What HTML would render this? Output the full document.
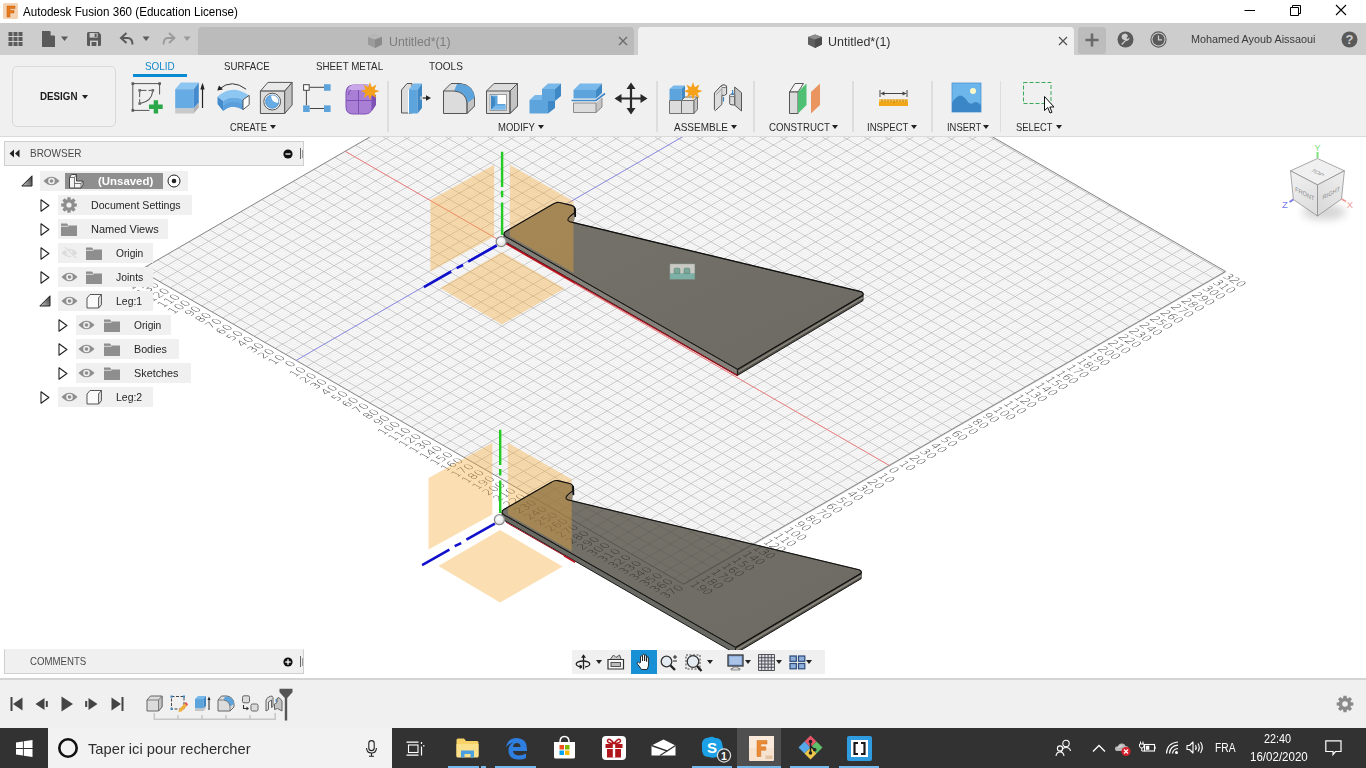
<!DOCTYPE html>
<html><head><meta charset="utf-8"><title>Autodesk Fusion 360</title>
<style>
*{box-sizing:border-box;margin:0;padding:0}
html,body{width:1366px;height:768px;overflow:hidden;background:#fff;font-family:"Liberation Sans",sans-serif;font-size:12px;color:#333}
.a{position:absolute}
svg{display:block;overflow:visible}
#title{position:absolute;left:0;top:0;width:1366px;height:23px;background:#fff}
#title .t{position:absolute;left:23px;top:3px;font-size:12.4px;color:#000;white-space:nowrap;letter-spacing:0.05px}
#tabbar{position:absolute;left:0;top:23px;width:1366px;height:32px;background:#cdcdcd}
#toolbar{position:absolute;left:0;top:55px;width:1366px;height:82px;background:#f0f0f0;border-bottom:1px solid #dadada}
#cv{position:absolute;left:0;top:137px;width:1366px;height:541px;background:#fff;overflow:hidden}
.tabname{position:absolute;font-size:12px;white-space:nowrap}
.tl{position:absolute;top:60px;font-size:11.5px;color:#333;white-space:nowrap;letter-spacing:0.1px}
.gl{position:absolute;top:120px;font-size:11px;color:#333;white-space:nowrap;letter-spacing:0.1px}
.gl i{display:inline-block;width:0;height:0;border-left:3px solid transparent;border-right:3px solid transparent;border-top:4px solid #222;margin-left:4px;vertical-align:2px}
.sep{position:absolute;top:82px;width:1px;height:50px;background:#dcdcdc}
.row{position:absolute;height:20px;background:rgba(238,238,238,0.93);white-space:nowrap}
.row span{position:absolute;top:3px;font-size:12px;color:#222}
#timeline{position:absolute;left:0;top:678px;width:1366px;height:50px;background:#f0f0f0;border-top:2px solid #d4d4d4}
#taskbar{position:absolute;left:0;top:728px;width:1366px;height:40px;background:#323232}
</style></head><body>
<div id="title">
<svg class="a" style="left:3px;top:3px" width="15" height="16" viewBox="0 0 15 16"><rect width="15" height="16" rx="1.5" fill="#f3d3b3"/><path d="M4,3 H12 V5.6 H7 V7.4 H11 V10 H7 V14 H4 Z" fill="#e87a1c"/><path d="M4,3 H12 V5.6 H7 V7.4 H11 V10 H7 V14 H4 Z" fill="none" stroke="#c25e10" stroke-width="0.5"/></svg>
<div class="a" style="white-space:nowrap;left:23.0px;top:5.0px;font-size:12.4px;line-height:14.9px;color:#000;transform:scaleX(0.937);transform-origin:0 50%;">Autodesk Fusion 360 (Education License)</div>
<svg class="a" style="left:1244px;top:4px" width="104" height="14" viewBox="0 0 104 14"><path d="M0.5,6.5 H11" stroke="#000" stroke-width="1" fill="none"/><path d="M46.5,3.5 H54.5 V11.5 H46.5 Z M48.5,3.5 V1.5 H56.5 V9.5 H54.5" stroke="#000" stroke-width="1" fill="none"/><path d="M92,1 L102,11 M102,1 L92,11" stroke="#000" stroke-width="1.1" fill="none"/></svg>
</div>
<div id="tabbar">
<!-- app grid -->
<svg class="a" style="left:8px;top:8px" width="16" height="16" viewBox="0 0 16 16" fill="#5a5a5a"><rect x="0.5" y="1" width="4" height="4"/><rect x="5.5" y="1" width="4" height="4"/><rect x="10.5" y="1" width="4" height="4"/><rect x="0.5" y="6" width="4" height="4"/><rect x="5.5" y="6" width="4" height="4"/><rect x="10.5" y="6" width="4" height="4"/><rect x="0.5" y="11" width="4" height="4"/><rect x="5.5" y="11" width="4" height="4"/><rect x="10.5" y="11" width="4" height="4"/></svg>
<svg class="a" style="left:42px;top:7px" width="28" height="18" viewBox="0 0 28 18"><path d="M0,1 H8 L13,6 V17 H0 Z" fill="#5a5a5a"/><path d="M8.6,0.6 V5.4 H13.4 Z" fill="#cdcdcd"/><path d="M19,6.5 H26 L22.5,11 Z" fill="#5a5a5a"/></svg>
<svg class="a" style="left:86px;top:8px" width="16" height="16" viewBox="0 0 16 16"><path d="M1,2.5 Q1,1 2.5,1 H12.5 L15,3.5 V13.5 Q15,15 13.5,15 H2.5 Q1,15 1,13.500 Z" fill="#5a5a5a"/><rect x="3.6" y="2" width="8" height="4.6" fill="#cdcdcd"/><rect x="8.6" y="2.6" width="2" height="3.4" fill="#5a5a5a"/><rect x="4" y="9.6" width="8" height="5.4" fill="#cdcdcd"/><rect x="5.6" y="11" width="4.8" height="4" fill="#5a5a5a"/></svg>
<svg class="a" style="left:119px;top:8px" width="34" height="16" viewBox="0 0 34 16"><path d="M7.5,2 L2,7 L7.5,12 M2.6,7 H8.5 Q13.5,7 13.5,13.5" stroke="#5a5a5a" stroke-width="2" fill="none"/><path d="M23.6,5.5 H30.600 L27.1,10 Z" fill="#5a5a5a"/></svg>
<svg class="a" style="left:161px;top:8px" width="34" height="16" viewBox="0 0 34 16"><path d="M8,2 L13.500,7 L8,12 M13,7 H7 Q2.500,7 2.500,13.500" stroke="#9a9a9a" stroke-width="1.8" fill="none"/><path d="M22.6,5.5 H29.600 L26.100,10 Z" fill="#9a9a9a"/></svg>
<!-- inactive tab -->
<div class="a" style="left:198px;top:4px;width:436px;height:28px;background:#bbbbbb;border-radius:4px 4px 0 0"></div>
<svg class="a" style="left:367px;top:9.500px" width="16" height="16" viewBox="0 0 16 16"><path d="M1,4 L8,1.500 L15,4 V11.500 L8,15 L1,11.500 Z" fill="#9b9b9b"/><path d="M1,4 L8,6.500 L15,4 L8,1.500 Z" fill="#b8b8b8"/><path d="M8,6.500 V15 L15,11.500 V4 Z" fill="#8a8a8a"/></svg>
<div class="a" style="white-space:nowrap;left:388.5px;top:12.0px;font-size:12px;line-height:14.4px;color:#7c7c7c;transform:scaleX(1.025);transform-origin:0 50%;">Untitled*(1)</div>
<svg class="a" style="left:618px;top:13px" width="10" height="10" viewBox="0 0 10 10"><path d="M1,1 L9,9 M9,1 L1,9" stroke="#6a6a6a" stroke-width="1.3"/></svg>
<!-- active tab -->
<div class="a" style="left:637.500px;top:4px;width:436.500px;height:28px;background:#f0f0f0;border-radius:4px 4px 0 0"></div>
<svg class="a" style="left:807px;top:9.500px" width="16" height="16" viewBox="0 0 16 16"><path d="M1,4 L8,1.500 L15,4 V11.500 L8,15 L1,11.500 Z" fill="#5f5f5f"/><path d="M1,4 L8,6.500 L15,4 L8,1.500 Z" fill="#8d8d8d"/><path d="M8,6.500 V15 L15,11.500 V4 Z" fill="#4c4c4c"/></svg>
<div class="a" style="white-space:nowrap;left:828.0px;top:12.0px;font-size:12px;line-height:14.4px;color:#333;transform:scaleX(1.041);transform-origin:0 50%;">Untitled*(1)</div>
<svg class="a" style="left:1058px;top:13px" width="10" height="10" viewBox="0 0 10 10"><path d="M1,1 L9,9 M9,1 L1,9" stroke="#555" stroke-width="1.3"/></svg>
<!-- plus -->
<div class="a" style="left:1078px;top:4px;width:28px;height:27px;background:#bcbcbc;border-radius:3px"></div>
<svg class="a" style="left:1085px;top:10px" width="14" height="14" viewBox="0 0 14 14"><path d="M7,0.500 V13.500 M0.500,7 H13.500" stroke="#6a6a6a" stroke-width="2.6"/></svg>
<!-- wrench -->
<svg class="a" style="left:1117px;top:8px" width="17" height="17" viewBox="0 0 17 17"><circle cx="8.500" cy="8.500" r="8" fill="#5a5a5a"/><path d="M4.200,13 L8.200,9 A3.200,3.200 0 1 1 11,5.200 L9.400,6.900 L10.600,8.100 L12.500,6.500 A3.300,3.300 0 0 1 8.900,10 L5.200,13.900 Z" fill="#cdcdcd"/></svg>
<!-- clock -->
<svg class="a" style="left:1150px;top:8px" width="17" height="17" viewBox="0 0 17 17"><circle cx="8.500" cy="8.500" r="7.600" fill="none" stroke="#5a5a5a" stroke-width="1.100"/><circle cx="8.500" cy="8.500" r="6" fill="#5a5a5a"/><path d="M8.500,4.500 V8.800 H12" stroke="#cdcdcd" stroke-width="1.200" fill="none"/></svg>
<div class="a" style="white-space:nowrap;left:1191.0px;top:9.2px;font-size:11.6px;line-height:13.9px;color:#3a3a3a;transform:scaleX(0.934);transform-origin:0 50%;">Mohamed Ayoub Aissaoui</div>
<svg class="a" style="left:1341px;top:8px" width="17" height="17" viewBox="0 0 17 17"><circle cx="8.500" cy="8.500" r="8" fill="#5a5a5a"/><text x="8.500" y="13" text-anchor="middle" font-family="Liberation Sans,sans-serif" font-weight="bold" font-size="13" fill="#cdcdcd">?</text></svg>
</div>
<div id="toolbar">
<div class="a" style="left:12px;top:11px;width:104px;height:61px;border:1px solid #d9d9d9;border-radius:5px;background:#f1f1f1"></div>
<div class="a" style="white-space:nowrap;left:39.5px;top:34.6px;font-size:11.5px;line-height:13.8px;color:#1a1a1a;font-weight:bold;transform:scaleX(0.851);transform-origin:0 50%;">DESIGN</div>
<div class="a" style="left:81.5px;top:39.5px;width:0;height:0;border-left:3.5px solid transparent;border-right:3.5px solid transparent;border-top:4.5px solid #222"></div>
<div class="a" style="white-space:nowrap;left:144.6px;top:4.6px;font-size:11.5px;line-height:13.8px;color:#1689cb;transform:scaleX(0.861);transform-origin:0 50%;">SOLID</div>
<div class="a" style="left:132.600px;top:18.800px;width:54px;height:2.800px;background:#0a8ad2"></div>
<div class="a" style="white-space:nowrap;left:223.5px;top:4.6px;font-size:11.5px;line-height:13.8px;color:#2b2b2b;transform:scaleX(0.841);transform-origin:0 50%;">SURFACE</div>
<div class="a" style="white-space:nowrap;left:316.3px;top:4.6px;font-size:11.5px;line-height:13.8px;color:#2b2b2b;transform:scaleX(0.851);transform-origin:0 50%;">SHEET METAL</div>
<div class="a" style="white-space:nowrap;left:428.9px;top:4.6px;font-size:11.5px;line-height:13.8px;color:#2b2b2b;transform:scaleX(0.874);transform-origin:0 50%;">TOOLS</div>
<div class="a" style="white-space:nowrap;left:229.7px;top:66.1px;font-size:10.8px;line-height:13.0px;color:#2b2b2b;transform:scaleX(0.856);transform-origin:0 50%;">CREATE</div>
<div class="a" style="left:270.2px;top:70.2px;width:0;height:0;border-left:3.5px solid transparent;border-right:3.5px solid transparent;border-top:4.5px solid #222"></div>
<div class="a" style="white-space:nowrap;left:497.6px;top:66.1px;font-size:10.8px;line-height:13.0px;color:#2b2b2b;transform:scaleX(0.879);transform-origin:0 50%;">MODIFY</div>
<div class="a" style="left:538.2px;top:70.2px;width:0;height:0;border-left:3.5px solid transparent;border-right:3.5px solid transparent;border-top:4.5px solid #222"></div>
<div class="a" style="white-space:nowrap;left:673.6px;top:66.1px;font-size:10.8px;line-height:13.0px;color:#2b2b2b;transform:scaleX(0.926);transform-origin:0 50%;">ASSEMBLE</div>
<div class="a" style="left:730.5px;top:70.2px;width:0;height:0;border-left:3.5px solid transparent;border-right:3.5px solid transparent;border-top:4.5px solid #222"></div>
<div class="a" style="white-space:nowrap;left:768.5px;top:66.1px;font-size:10.8px;line-height:13.0px;color:#2b2b2b;transform:scaleX(0.897);transform-origin:0 50%;">CONSTRUCT</div>
<div class="a" style="left:832.0px;top:70.2px;width:0;height:0;border-left:3.5px solid transparent;border-right:3.5px solid transparent;border-top:4.5px solid #222"></div>
<div class="a" style="white-space:nowrap;left:867.3px;top:66.1px;font-size:10.8px;line-height:13.0px;color:#2b2b2b;transform:scaleX(0.884);transform-origin:0 50%;">INSPECT</div>
<div class="a" style="left:910.5px;top:70.2px;width:0;height:0;border-left:3.5px solid transparent;border-right:3.5px solid transparent;border-top:4.5px solid #222"></div>
<div class="a" style="white-space:nowrap;left:946.6px;top:66.1px;font-size:10.8px;line-height:13.0px;color:#2b2b2b;transform:scaleX(0.870);transform-origin:0 50%;">INSERT</div>
<div class="a" style="left:983.1px;top:70.2px;width:0;height:0;border-left:3.5px solid transparent;border-right:3.5px solid transparent;border-top:4.5px solid #222"></div>
<div class="a" style="white-space:nowrap;left:1015.7px;top:66.1px;font-size:10.8px;line-height:13.0px;color:#2b2b2b;transform:scaleX(0.869);transform-origin:0 50%;">SELECT</div>
<div class="a" style="left:1055.5px;top:70.2px;width:0;height:0;border-left:3.5px solid transparent;border-right:3.5px solid transparent;border-top:4.5px solid #222"></div>
<div class="a" style="left:387.0px;top:26px;width:1.800px;height:51px;background:#dddddd"></div>
<div class="a" style="left:656.3px;top:26px;width:1.800px;height:51px;background:#dddddd"></div>
<div class="a" style="left:753.1px;top:26px;width:1.800px;height:51px;background:#dddddd"></div>
<div class="a" style="left:852.4px;top:26px;width:1.800px;height:51px;background:#dddddd"></div>
<div class="a" style="left:930.8px;top:26px;width:1.800px;height:51px;background:#dddddd"></div>
<div class="a" style="left:999.6px;top:26px;width:1.800px;height:51px;background:#dddddd"></div>
<svg class="a" style="left:130px;top:25px" width="36" height="35" viewBox="0 0 36 35"><path d="M2.800,3.600 H29.600 V14.500 M2.800,3.600 V30.400 H19.500" stroke="#555" stroke-width="1" fill="none"/><rect x="1.500" y="2.300" width="2.600" height="2.600" fill="#555"/><rect x="28.300" y="2.300" width="2.600" height="2.600" fill="#555"/><rect x="1.500" y="29.100" width="2.600" height="2.600" fill="#555"/><path d="M11,10.400 H21.500 M9.700,11.700 V22" stroke="#555" stroke-width="1" stroke-dasharray="5.500 2" fill="none"/><path d="M11,23.300 Q21.500,21 22.600,11.800" stroke="#555" stroke-width="1.100" fill="none"/><rect x="8.400" y="9.100" width="2.600" height="2.600" fill="#666"/><rect x="21.500" y="9.100" width="2.600" height="2.600" fill="#666"/><rect x="8.400" y="22.200" width="2.600" height="2.600" fill="#666"/><path d="M23.700,20.200 H28.100 V24.600 H32.700 V29 H28.100 V33.500 H23.700 V29 H19 V24.600 H23.700 Z" fill="#2ba84a"/></svg>
<svg class="a" style="left:174px;top:26px" width="33" height="34" viewBox="0 0 33 34"><path d="M1.200,8.200 L6.800,1.400 H24.800 L19.800,8.200 Z" fill="#8ec6f2"/><path d="M1.200,8.200 H19.800 V27.500 H1.200 Z" fill="#67abe4"/><path d="M19.800,8.200 L24.800,1.400 V21.500 L19.800,27.500 Z" fill="#448bcd"/><path d="M1.200,27.500 H19.800 V32.500 H1.200 Z" fill="#c9c9c9"/><path d="M19.800,27.500 L24.800,21.500 V26.500 L19.800,32.500 Z" fill="#b4b4b4"/><path d="M28.500,27 V4.500" stroke="#222" stroke-width="1.200"/><path d="M26.300,8.500 L28.500,1.800 L30.700,8.500 Z" fill="#222"/></svg>
<svg class="a" style="left:215px;top:27px" width="36" height="32" viewBox="0 0 36 32"><path d="M31.100,7.200 Q17,-3.500 4.500,6.800" stroke="#333" stroke-width="1" fill="none"/><path d="M2.300,8.600 L4,3.400 L8,7.600 Z" fill="#222"/><path d="M2.500,14.700 Q16.800,1.500 34.200,13.400 L28,17.800 Q16.800,12.800 8.100,19 Z" fill="#8ec6f2"/><path d="M2.500,14.700 L8.100,19 V29 L2.500,22.100 Z" fill="#448bcd"/><path d="M8.100,19 Q16.800,12.800 28,17.800 V27.700 Q16.800,21 8.100,29 Z" fill="#67abe4"/><path d="M8.100,24 Q16.800,17 28,22.500 V27.700 Q16.800,21 8.100,29 Z" fill="#5a9fdb"/><path d="M28,17.800 L34.200,13.400 V22.700 L28,27.700 Z" fill="#fff" stroke="#444" stroke-width="0.900" stroke-linejoin="round"/></svg>
<svg class="a" style="left:259px;top:26px" width="34" height="34" viewBox="0 0 34 34"><path d="M1.400,10.100 L8.900,1.400 H33.100 L25.700,10.100 Z" fill="#e9e9e9" stroke="#555" stroke-width="1" stroke-linejoin="round"/><path d="M1.400,10.100 H25.700 V32.500 H1.400 Z" fill="#dcdcdc" stroke="#555" stroke-width="1" stroke-linejoin="round"/><path d="M25.700,10.100 L33.100,1.400 V24 L25.700,32.500 Z" fill="#c2c2c2" stroke="#555" stroke-width="1" stroke-linejoin="round"/><circle cx="13.200" cy="20.600" r="8.400" fill="#fff" stroke="#555" stroke-width="1"/><circle cx="13.200" cy="20.600" r="6.700" fill="#67abe4"/><clipPath id="hc"><circle cx="13.200" cy="20.600" r="6.700"/></clipPath><circle cx="18.400" cy="15.600" r="6.200" fill="#fff" clip-path="url(#hc)"/><circle cx="13.200" cy="20.600" r="6.700" fill="none" stroke="#3f7fc0" stroke-width="0.700"/></svg>
<svg class="a" style="left:302px;top:27px" width="31" height="32" viewBox="0 0 31 32"><path d="M4.400,8.400 V23.400 M7.700,5.300 H22 M7.700,26.500 H22" stroke="#444" stroke-width="1" fill="none"/><rect x="1.600" y="2.700" width="5.600" height="5.600" fill="#fff" stroke="#444" stroke-width="1"/><rect x="22" y="2.200" width="6.600" height="6.600" fill="#5ea4dc"/><rect x="1.100" y="23.400" width="6.600" height="6.600" fill="#5ea4dc"/><rect x="22" y="23.400" width="6.600" height="6.600" fill="#5ea4dc"/></svg>
<svg class="a" style="left:344px;top:26px" width="36" height="35" viewBox="0 0 36 35"><path d="M2,12 Q2,4 10,4 H22 Q28,4 28,10 V26 Q28,33 21,33 H9 Q2,33 2,26 Z" fill="#a97fd6" stroke="#7d50b4" stroke-width="1"/><path d="M4,8 Q6,3.500 11,3.500 H22 Q26,3.500 27.500,7 L25,9 H7 Z" fill="#c9a8ea"/><path d="M28,12 L32,14 V24 L28,30 Z" fill="#7d50b4"/><path d="M2.500,19.500 H27.500 M14.500,9 V32.500 M7,9 Q4.500,10 4.500,14" stroke="#7d50b4" stroke-width="1" fill="none"/><path d="M26,1 L27.800,6.200 L32.500,3.500 L30.500,8.500 L35.500,10 L30.500,12 L32.500,17 L27.800,14 L26,19 L24.200,14 L19.500,17 L21.500,12 L16.800,10 L21.500,8.500 L19.500,3.500 L24.200,6.200 Z" fill="#f5a11c"/></svg>
<svg class="a" style="left:400px;top:26px" width="32" height="34" viewBox="0 0 32 34"><path d="M1.500,9 L7,2.500 H12 V32 H1.500 Z" fill="#dcdcdc" stroke="#555" stroke-width="1"/><path d="M8.500,9 L13.500,2.500 H22 L17.500,9 Z" fill="#79b8ea"/><path d="M8.500,9 H17.500 V32.500 H8.500 Z" fill="#5ea4dc"/><path d="M17.500,9 L22,2.500 V27 L17.500,32.500 Z" fill="#3f88c6"/><path d="M8.500,9 V32.500" stroke="#fff" stroke-width="1"/><path d="M20,17 H27" stroke="#222" stroke-width="1.200"/><path d="M26,14.200 L31,17 L26,19.800 Z" fill="#222"/><rect x="20" y="15.500" width="3" height="3" fill="#fff" opacity="0.6"/></svg>
<svg class="a" style="left:442px;top:26px" width="35" height="34" viewBox="0 0 35 34"><path d="M1.500,10 L9,2.500 H18 Q32,4 32.500,18 V25 L25,32.500 H1.500 Z" fill="#dcdcdc" stroke="#555" stroke-width="1"/><path d="M25,32.500 V21 L32.500,16 V25 Z" fill="#c4c4c4" stroke="#555" stroke-width="0.800"/><path d="M15,3 H18 Q32,4 32.500,17 L25,22 Q24,11 12,10 Z" fill="#5ea4dc"/><path d="M1.500,10 H12 Q24,11 25,22 V32.500" stroke="#555" stroke-width="1" fill="none"/></svg>
<svg class="a" style="left:485px;top:26px" width="35" height="34" viewBox="0 0 35 34"><path d="M1.500,10 L9,2.500 H32.500 V25 L25,32.500 H1.500 Z" fill="#dcdcdc" stroke="#555" stroke-width="1"/><path d="M25,10 L32.500,2.500 V25 L25,32.500 Z" fill="#c4c4c4" stroke="#555" stroke-width="1"/><path d="M1.500,10 H25 V32.500" stroke="#555" stroke-width="1" fill="none"/><rect x="5" y="13.500" width="16.500" height="16" fill="#fff" stroke="#888" stroke-width="0.800"/><path d="M6,14.500 H12.500 V23 H20.500 V28.500 H6 Z" fill="#5ea4dc"/><path d="M6,14.500 H12.500 V23 H20.500 L17,26 H9 V17 Z" fill="#3f88c6" opacity="0.0"/><path d="M6,28.500 L10,24.500 H20.500 V28.500 Z" fill="#79b8ea"/><path d="M6,14.500 L10,17 V24.500 L6,28.500 Z" fill="#3f88c6"/></svg>
<svg class="a" style="left:528px;top:26px" width="35" height="34" viewBox="0 0 35 34"><path d="M14,8 L20,2.500 H33 L27,8 Z" fill="#79b8ea"/><path d="M14,8 H27 V20 H14 Z" fill="#5ea4dc"/><path d="M27,8 L33,2.500 V15 L27,20 Z" fill="#3f88c6"/><path d="M1.500,19 L7,14 H20 L20,14 L14.500,19 Z" fill="#79b8ea"/><path d="M1.500,19 H20 V32.500 H1.500 Z" fill="#5ea4dc"/><path d="M20,20 L27,20 L27,20 V27 L20,32.500 Z" fill="#3f88c6"/><path d="M14,14 H20 V20 H14 Z" fill="#5ea4dc"/></svg>
<svg class="a" style="left:571px;top:26px" width="35" height="34" viewBox="0 0 35 34"><path d="M2.500,9 L9,2.500 H31 L25,9 Z" fill="#79b8ea"/><path d="M2.500,9 H25 V17.500 H2.500 Z" fill="#5ea4dc"/><path d="M25,9 L31,2.500 V12 L25,17.500 Z" fill="#3f88c6"/><path d="M0.500,19.500 H25 L34,12.500" stroke="#3f88c6" stroke-width="1.600" fill="none"/><path d="M2.500,22 H25 V31.500 H2.500 Z" fill="#dcdcdc"/><path d="M25,22 L31,16.500 V26 L25,31.500 Z" fill="#c4c4c4"/><path d="M2.500,22 H25 V31.500 H2.500 Z M25,31.500 L31,26 V17" stroke="#777" stroke-width="0.800" fill="none"/></svg>
<svg class="a" style="left:614px;top:27px" width="34" height="33" viewBox="0 0 34 33"><path d="M17,4 V29 M4,16.500 H30" stroke="#2a2a2a" stroke-width="2.200"/><path d="M17,0.500 L21.500,7 H12.500 Z M17,32.500 L21.500,26 H12.500 Z M0.500,16.500 L7.500,12 V21 Z M33.500,16.500 L26.500,12 V21 Z" fill="#2a2a2a"/></svg>
<svg class="a" style="left:668px;top:26px" width="36" height="35" viewBox="0 0 36 35"><path d="M1.500,8 L5.500,4.500 H17 L13.500,8 Z" fill="#79b8ea"/><path d="M1.500,8 H13.500 V19.500 H1.500 Z" fill="#5ea4dc"/><path d="M13.500,8 L17,4.500 V16 L13.500,19.500 Z" fill="#3f88c6"/><path d="M1.500,19.500 H13.500 V32.500 H1.500 Z" fill="#dcdcdc" stroke="#666" stroke-width="0.900"/><path d="M13.500,19.500 H26 V32.500 H13.500 Z" fill="#dcdcdc" stroke="#666" stroke-width="0.900"/><path d="M13.500,19.500 L17,16 H29.500 L26,19.500 Z" fill="#ececec" stroke="#666" stroke-width="0.900"/><path d="M26,19.500 L29.500,16 V28.500 L26,32.500 Z" fill="#c4c4c4" stroke="#666" stroke-width="0.900"/><path d="M25,1 L26.800,6.200 L31.500,3.500 L29.500,8.500 L34.500,10 L29.500,12 L31.500,17 L26.800,14 L25,19 L23.200,14 L18.500,17 L20.500,12 L15.800,10 L20.500,8.500 L18.500,3.500 L23.200,6.200 Z" fill="#f5a11c"/></svg>
<svg class="a" style="left:713px;top:28px" width="31" height="30" viewBox="0 0 31 30"><path d="M1.400,10 L8.200,2.600 Q10.600,0.800 13.600,3 V11 Q11.500,13 8.900,12.400 V21.400 L2.400,27.600 L1.400,26.700 Z" fill="#dcdcdc" stroke="#555" stroke-width="1" stroke-linejoin="round"/><path d="M3.300,11.600 L8.900,5.600 V12.400" stroke="#8a8a8a" stroke-width="0.800" fill="none"/><ellipse cx="10.900" cy="3.300" rx="2.500" ry="1.300" fill="#f4f4f4" stroke="#555" stroke-width="0.800"/><path d="M21.700,4 L28.500,9.700 V28 L21.700,22.100 Z" fill="#c4c4c4" stroke="#555" stroke-width="1" stroke-linejoin="round"/><path d="M16.700,12.400 V20.500 Q16.700,21.500 18,21.700 L21.700,22.100 V12.400 Z" fill="#dcdcdc" stroke="#555" stroke-width="1" stroke-linejoin="round"/><ellipse cx="19.200" cy="12.400" rx="2.500" ry="1.300" fill="#f0f0f0" stroke="#555" stroke-width="0.800"/><path d="M10.500,14 V18.600 M19.600,7.100 V12.100" stroke="#3f88c6" stroke-width="1.200"/><path d="M18,10.900 H21.200" stroke="#3f88c6" stroke-width="1"/></svg>
<svg class="a" style="left:788px;top:26px" width="34" height="34" viewBox="0 0 34 34"><path d="M1.500,11 L7,2.500 H15.500 L10,11 Z" fill="#f4f4f4" stroke="#555" stroke-width="1"/><path d="M1.500,11 H10 V32.500 H1.500 Z" fill="#dcdcdc" stroke="#555" stroke-width="1"/><path d="M10,11 L18.500,2.500 V24 L10,32.500 Z" fill="#4fbf74"/><path d="M23,11 L32,2.500 V24 L23,32.500 Z" fill="#ea9560"/></svg>
<svg class="a" style="left:878px;top:34px" width="31" height="19" viewBox="0 0 31 19"><path d="M2,1 V8 M29,1 V8 M3,4.500 H28" stroke="#444" stroke-width="1" fill="none"/><path d="M2.500,4.500 L6.500,2.500 V6.500 Z M28.500,4.500 L24.500,2.500 V6.500 Z" fill="#444"/><rect x="1" y="10.500" width="29" height="6.500" fill="#f0a818"/><rect x="1" y="10.500" width="29" height="2.200" fill="#f7c452"/><path d="M4,10.500 V13 M7,10.500 V13 M10,10.500 V13 M13,10.500 V13 M16,10.500 V14 M19,10.500 V13 M22,10.500 V13 M25,10.500 V13 M28,10.500 V13" stroke="#a86a00" stroke-width="0.700"/></svg>
<svg class="a" style="left:952px;top:28px" width="29" height="29" viewBox="0 0 29 29"><rect width="29" height="29" fill="#6db6ec"/><rect width="29" height="29" fill="none" stroke="#4a96d4" stroke-width="0.800"/><path d="M0,20 Q3,14 8,12.500 Q12,12.500 16,19 Q19,22 22,19.500 Q25,18 29,22 V29 H0 Z" fill="#3a86c6"/><circle cx="21" cy="8" r="3" fill="#fdf8c8"/></svg>
<svg class="a" style="left:1022px;top:26px" width="34" height="34" viewBox="0 0 34 34"><rect x="1.500" y="1.500" width="27.500" height="21" fill="none" stroke="#3aa85a" stroke-width="1" stroke-dasharray="4 2"/><path d="M22.500,15.500 V29.500 L25.800,26.500 L28,32 L30,31.200 L27.800,26 H32 Z" fill="#fff" stroke="#111" stroke-width="1"/></svg>
</div>
<div id="cv"><svg class="cv" width="1366" height="541" viewBox="0 0 1366 541">
<defs><linearGradient id="pg" x1="0" y1="0" x2="1" y2="1"><stop offset="0" stop-color="#75726a"/><stop offset="1" stop-color="#6c6a62"/></linearGradient><radialGradient id="sph" cx="0.4" cy="0.35" r="0.7"><stop offset="0" stop-color="#fff"/><stop offset="1" stop-color="#ddd"/></radialGradient>
<clipPath id="c2"><path d="M502.1,375.3 Q501.8,373.7 503.8,372.6 L551.8,344.9 Q554.8,343 557.8,343.6 L569.8,346.5 Q573.1,347.5 573.1,350.7 L573.1,353.6 Q564.6,359.6 566.1,361.6 Q567.6,363.3 571.6,363.7 L858.9,432.7 Q861.4,433.3 861.4,435.7 L861.1,436.3 L735.5,510.5 L503.1,377.5 Z"/><path d="M502.1,375.3 L503.1,377.5 L735.5,510.5 L735.5,516.5 L503.5,382.9 L502.1,379.7 Z"/><path d="M735.5,510.5 L861.1,436.3 L861.1,441.7 L735.5,516.5 Z"/></clipPath>
<linearGradient id="vc1" x1="0" y1="0" x2="0.6" y2="1"><stop offset="0" stop-color="#f2f2f2"/><stop offset="1" stop-color="#dedede"/></linearGradient><linearGradient id="vc2" x1="1" y1="0" x2="0.4" y2="1"><stop offset="0" stop-color="#efefef"/><stop offset="1" stop-color="#dadada"/></linearGradient><filter id="bl" x="-50%" y="-100%" width="200%" height="300%"><feGaussianBlur stdDeviation="4"/></filter></defs>
<polygon points="139.9,133.2 683.5,447.1 1225.5,134.4 680.8,-180.2" fill="#fdfdfd"/>
<path d="M140.9,133.8 L681.9,-179.6M143,135 L684,-178.4M145.1,136.2 L686.1,-177.2M147.2,137.4 L688.2,-176M151.4,139.9 L692.4,-173.5M153.5,141.1 L694.5,-172.3M155.6,142.3 L696.6,-171.1M157.7,143.5 L698.7,-169.9M161.9,145.9 L702.9,-167.5M164,147.1 L705,-166.2M166.1,148.3 L707.1,-165M168.2,149.6 L709.2,-163.8M172.4,152 L713.4,-161.4M174.5,153.2 L715.5,-160.2M176.6,154.4 L717.6,-159M178.7,155.6 L719.7,-157.7M182.9,158 L723.9,-155.3M185,159.2 L726,-154.1M187.1,160.5 L728.1,-152.9M189.2,161.7 L730.2,-151.7M193.4,164.1 L734.4,-149.2M195.5,165.3 L736.5,-148M197.6,166.5 L738.6,-146.8M199.7,167.7 L740.7,-145.6M203.9,170.1 L744.9,-143.2M206,171.4 L747,-142M208.1,172.6 L749.1,-140.8M210.2,173.8 L751.2,-139.5M214.4,176.2 L755.4,-137.1M216.5,177.4 L757.5,-135.9M218.6,178.6 L759.6,-134.7M220.7,179.8 L761.7,-133.5M224.8,182.3 L765.9,-131M226.9,183.5 L768,-129.8M229,184.7 L770.1,-128.6M231.1,185.9 L772.2,-127.4M235.3,188.3 L776.4,-125M237.4,189.5 L778.5,-123.8M239.5,190.7 L780.6,-122.5M241.6,191.9 L782.7,-121.3M245.8,194.4 L786.9,-118.9M247.9,195.6 L789,-117.7M250,196.8 L791.1,-116.5M252.1,198 L793.2,-115.3M256.3,200.4 L797.4,-112.8M258.4,201.6 L799.5,-111.6M260.5,202.8 L801.6,-110.4M262.6,204.1 L803.7,-109.2M266.8,206.5 L807.9,-106.8M268.9,207.7 L810.1,-105.5M271,208.9 L812.2,-104.3M273.1,210.1 L814.3,-103.1M277.3,212.5 L818.5,-100.7M279.4,213.7 L820.6,-99.5M281.5,215 L822.7,-98.3M283.6,216.2 L824.8,-97.1M287.8,218.6 L829,-94.6M289.9,219.8 L831.1,-93.4M292,221 L833.2,-92.2M294.1,222.2 L835.3,-91M298.3,224.6 L839.5,-88.6M300.3,225.9 L841.6,-87.3M302.4,227.1 L843.7,-86.1M304.5,228.3 L845.8,-84.9M308.7,230.7 L850,-82.5M310.8,231.9 L852.1,-81.3M312.9,233.1 L854.2,-80.1M315,234.3 L856.3,-78.8M319.2,236.8 L860.5,-76.4M321.3,238 L862.6,-75.2M323.4,239.2 L864.7,-74M325.5,240.4 L866.8,-72.8M329.7,242.8 L871,-70.3M331.8,244 L873.1,-69.1M333.9,245.2 L875.2,-67.9M336,246.4 L877.3,-66.7M340.2,248.9 L881.5,-64.3M342.3,250.1 L883.6,-63.1M344.4,251.3 L885.7,-61.9M346.5,252.5 L887.8,-60.6M350.7,254.9 L892,-58.2M352.8,256.1 L894.1,-57M354.9,257.3 L896.2,-55.8M357,258.5 L898.3,-54.6M361.2,261 L902.5,-52.1M363.3,262.2 L904.6,-50.9M365.4,263.4 L906.7,-49.7M367.5,264.6 L908.8,-48.5M371.7,267 L913,-46.1M373.8,268.2 L915.1,-44.9M375.9,269.4 L917.2,-43.6M377.9,270.7 L919.3,-42.4M382.1,273.1 L923.5,-40M384.2,274.3 L925.6,-38.8M386.3,275.5 L927.7,-37.6M388.4,276.7 L929.8,-36.4M392.6,279.1 L934,-33.9M394.7,280.3 L936.1,-32.7M396.8,281.6 L938.2,-31.5M398.9,282.8 L940.3,-30.3M403.1,285.2 L944.5,-27.9M405.2,286.4 L946.6,-26.7M407.3,287.6 L948.8,-25.4M409.4,288.8 L950.9,-24.2M413.6,291.2 L955.1,-21.8M415.7,292.5 L957.2,-20.6M417.8,293.7 L959.3,-19.4M419.9,294.9 L961.4,-18.2M424.1,297.3 L965.6,-15.7M426.2,298.5 L967.7,-14.5M428.3,299.7 L969.8,-13.3M430.4,300.9 L971.9,-12.1M434.6,303.4 L976.1,-9.7M436.7,304.6 L978.2,-8.4M438.8,305.8 L980.3,-7.2M440.9,307 L982.4,-6M445.1,309.4 L986.6,-3.6M447.2,310.6 L988.7,-2.4M449.3,311.8 L990.8,-1.2M451.4,313 L992.9,0M455.5,315.5 L997.1,2.5M457.6,316.7 L999.2,3.7M459.7,317.9 L1001.3,4.9M461.8,319.1 L1003.4,6.1M466,321.5 L1007.6,8.5M468.1,322.7 L1009.7,9.8M470.2,323.9 L1011.8,11M472.3,325.2 L1013.9,12.2M476.5,327.6 L1018.1,14.6M478.6,328.8 L1020.2,15.8M480.7,330 L1022.3,17M482.8,331.2 L1024.4,18.3M487,333.6 L1028.6,20.7M489.1,334.8 L1030.7,21.9M491.2,336.1 L1032.8,23.1M493.3,337.3 L1034.9,24.3M497.5,339.7 L1039.1,26.7M499.6,340.9 L1041.2,28M501.7,342.1 L1043.3,29.2M503.8,343.3 L1045.4,30.4M508,345.7 L1049.6,32.8M510.1,347 L1051.7,34M512.2,348.2 L1053.8,35.2M514.3,349.4 L1055.9,36.5M518.5,351.8 L1060.1,38.9M520.6,353 L1062.2,40.1M522.7,354.2 L1064.3,41.3M524.8,355.4 L1066.4,42.5M528.9,357.9 L1070.6,45M531,359.1 L1072.7,46.2M533.1,360.3 L1074.8,47.4M535.2,361.5 L1076.9,48.6M539.4,363.9 L1081.1,51M541.5,365.1 L1083.2,52.2M543.6,366.3 L1085.3,53.5M545.7,367.5 L1087.4,54.7M549.9,370 L1091.6,57.1M552,371.2 L1093.7,58.3M554.1,372.4 L1095.8,59.5M556.2,373.6 L1098,60.7M560.4,376 L1102.2,63.2M562.5,377.2 L1104.3,64.4M564.6,378.4 L1106.4,65.6M566.7,379.7 L1108.5,66.8M570.9,382.1 L1112.7,69.2M573,383.3 L1114.8,70.4M575.1,384.5 L1116.9,71.7M577.2,385.7 L1119,72.9M581.4,388.1 L1123.2,75.3M583.5,389.3 L1125.3,76.5M585.6,390.5 L1127.4,77.7M587.7,391.8 L1129.5,78.9M591.9,394.2 L1133.7,81.4M594,395.4 L1135.8,82.6M596.1,396.6 L1137.9,83.8M598.2,397.8 L1140,85M602.3,400.2 L1144.2,87.4M604.4,401.4 L1146.3,88.6M606.5,402.7 L1148.4,89.9M608.6,403.9 L1150.5,91.1M612.8,406.3 L1154.7,93.5M614.9,407.5 L1156.8,94.7M617,408.7 L1158.9,95.9M619.1,409.9 L1161,97.1M623.3,412.3 L1165.2,99.6M625.4,413.6 L1167.3,100.8M627.5,414.8 L1169.4,102M629.6,416 L1171.5,103.2M633.8,418.4 L1175.7,105.6M635.9,419.6 L1177.8,106.9M638,420.8 L1179.9,108.1M640.1,422 L1182,109.3M644.3,424.5 L1186.2,111.7M646.4,425.7 L1188.3,112.9M648.5,426.9 L1190.4,114.1M650.6,428.1 L1192.5,115.3M654.8,430.5 L1196.7,117.8M656.9,431.7 L1198.8,119M659,432.9 L1200.9,120.2M661.1,434.1 L1203,121.4M665.3,436.6 L1207.2,123.8M667.4,437.8 L1209.3,125.1M669.5,439 L1211.4,126.3M671.5,440.2 L1213.5,127.5M675.7,442.6 L1217.7,129.9M677.8,443.8 L1219.8,131.1M679.9,445 L1221.9,132.3M682,446.3 L1224,133.6M677.2,-178.1 L1221.9,136.5M675.2,-176.9 L1219.8,137.7M673.1,-175.7 L1217.7,138.9M671,-174.5 L1215.7,140.1M666.8,-172.1 L1211.5,142.5M664.7,-170.9 L1209.4,143.7M662.6,-169.7 L1207.3,144.9M660.5,-168.4 L1205.2,146.1M656.3,-166 L1201,148.5M654.2,-164.8 L1198.9,149.8M652.2,-163.6 L1196.8,151M650.1,-162.4 L1194.7,152.2M645.9,-160 L1190.5,154.6M643.8,-158.8 L1188.4,155.8M641.7,-157.5 L1186.3,157M639.6,-156.3 L1184.2,158.2M635.4,-153.9 L1180,160.6M633.3,-152.7 L1177.9,161.8M631.2,-151.5 L1175.8,163M629.2,-150.3 L1173.8,164.3M625,-147.9 L1169.6,166.7M622.9,-146.6 L1167.5,167.9M620.8,-145.4 L1165.4,169.1M618.7,-144.2 L1163.3,170.3M614.5,-141.8 L1159.1,172.7M612.4,-140.6 L1157,173.9M610.3,-139.4 L1154.9,175.1M608.3,-138.2 L1152.8,176.3M604.1,-135.7 L1148.6,178.8M602,-134.5 L1146.5,180M599.9,-133.3 L1144.4,181.2M597.8,-132.1 L1142.3,182.4M593.6,-129.7 L1138.1,184.8M591.5,-128.5 L1136.1,186M589.4,-127.3 L1134,187.2M587.4,-126.1 L1131.9,188.4M583.2,-123.6 L1127.7,190.8M581.1,-122.4 L1125.6,192M579,-121.2 L1123.5,193.3M576.9,-120 L1121.4,194.5M572.7,-117.6 L1117.2,196.9M570.6,-116.4 L1115.1,198.1M568.5,-115.2 L1113,199.3M566.5,-114 L1110.9,200.5M562.3,-111.5 L1106.7,202.9M560.2,-110.3 L1104.6,204.1M558.1,-109.1 L1102.6,205.3M556,-107.9 L1100.5,206.5M551.8,-105.5 L1096.3,209M549.7,-104.3 L1094.2,210.2M547.7,-103.1 L1092.1,211.4M545.6,-101.8 L1090,212.6M541.4,-99.4 L1085.8,215M539.3,-98.2 L1083.7,216.2M537.2,-97 L1081.6,217.4M535.1,-95.8 L1079.5,218.6M530.9,-93.4 L1075.3,221M528.9,-92.2 L1073.2,222.2M526.8,-91 L1071.2,223.4M524.7,-89.7 L1069.1,224.7M520.5,-87.3 L1064.9,227.1M518.4,-86.1 L1062.8,228.3M516.3,-84.9 L1060.7,229.5M514.2,-83.7 L1058.6,230.7M510.1,-81.3 L1054.4,233.1M508,-80.1 L1052.3,234.3M505.9,-78.9 L1050.2,235.5M503.8,-77.6 L1048.1,236.7M499.6,-75.2 L1043.9,239.1M497.5,-74 L1041.9,240.4M495.4,-72.8 L1039.8,241.6M493.4,-71.6 L1037.7,242.8M489.2,-69.2 L1033.5,245.2M487.1,-68 L1031.4,246.4M485,-66.8 L1029.3,247.6M482.9,-65.5 L1027.2,248.8M478.7,-63.1 L1023,251.2M476.6,-61.9 L1020.9,252.4M474.6,-60.7 L1018.8,253.6M472.5,-59.5 L1016.7,254.8M468.3,-57.1 L1012.6,257.2M466.2,-55.9 L1010.5,258.5M464.1,-54.7 L1008.4,259.7M462,-53.4 L1006.3,260.9M457.9,-51 L1002.1,263.3M455.8,-49.8 L1000,264.5M453.7,-48.6 L997.9,265.7M451.6,-47.4 L995.8,266.9M447.4,-45 L991.6,269.3M445.3,-43.8 L989.6,270.5M443.2,-42.6 L987.5,271.7M441.2,-41.4 L985.4,272.9M437,-38.9 L981.2,275.4M434.9,-37.7 L979.1,276.6M432.8,-36.5 L977,277.8M430.7,-35.3 L974.9,279M426.5,-32.9 L970.7,281.4M424.5,-31.7 L968.6,282.6M422.4,-30.5 L966.5,283.8M420.3,-29.3 L964.5,285M416.1,-26.8 L960.3,287.4M414,-25.6 L958.2,288.6M411.9,-24.4 L956.1,289.8M409.9,-23.2 L954,291M405.7,-20.8 L949.8,293.4M403.6,-19.6 L947.7,294.7M401.5,-18.4 L945.6,295.9M399.4,-17.2 L943.5,297.1M395.2,-14.7 L939.4,299.5M393.2,-13.5 L937.3,300.7M391.1,-12.3 L935.2,301.9M389,-11.1 L933.1,303.1M384.8,-8.7 L928.9,305.5M382.7,-7.5 L926.8,306.7M380.6,-6.3 L924.7,307.9M378.6,-5.1 L922.6,309.1M374.4,-2.7 L918.5,311.5M372.3,-1.5 L916.4,312.7M370.2,-0.2 L914.3,314M368.1,1 L912.2,315.2M364,3.4 L908,317.6M361.9,4.6 L905.9,318.8M359.8,5.8 L903.8,320M357.7,7 L901.7,321.2M353.5,9.4 L897.6,323.6M351.4,10.6 L895.5,324.8M349.4,11.8 L893.4,326M347.3,13.1 L891.3,327.2M343.1,15.5 L887.1,329.6M341,16.7 L885,330.8M338.9,17.9 L882.9,332M336.8,19.1 L880.8,333.2M332.7,21.5 L876.7,335.7M330.6,22.7 L874.6,336.9M328.5,23.9 L872.5,338.1M326.4,25.1 L870.4,339.3M322.2,27.6 L866.2,341.7M320.2,28.8 L864.1,342.9M318.1,30 L862,344.1M316,31.2 L859.9,345.3M311.8,33.6 L855.8,347.7M309.7,34.8 L853.7,348.9M307.6,36 L851.6,350.1M305.6,37.2 L849.5,351.3M301.4,39.6 L845.3,353.7M299.3,40.8 L843.2,354.9M297.2,42 L841.1,356.2M295.1,43.3 L839,357.4M291,45.7 L834.9,359.8M288.9,46.9 L832.8,361M286.8,48.1 L830.7,362.2M284.7,49.3 L828.6,363.4M280.5,51.7 L824.4,365.8M278.5,52.9 L822.3,367M276.4,54.1 L820.2,368.2M274.3,55.3 L818.2,369.4M270.1,57.8 L814,371.8M268,59 L811.9,373M265.9,60.2 L809.8,374.2M263.9,61.4 L807.7,375.4M259.7,63.8 L803.5,377.8M257.6,65 L801.4,379.1M255.5,66.2 L799.4,380.3M253.4,67.4 L797.3,381.5M249.3,69.8 L793.1,383.9M247.2,71 L791,385.1M245.1,72.2 L788.9,386.3M243,73.5 L786.8,387.5M238.9,75.9 L782.7,389.9M236.8,77.1 L780.6,391.1M234.7,78.3 L778.5,392.3M232.6,79.5 L776.4,393.5M228.4,81.9 L772.2,395.9M226.3,83.1 L770.1,397.1M224.3,84.3 L768,398.3M222.2,85.5 L765.9,399.5M218,87.9 L761.8,401.9M215.9,89.1 L759.7,403.1M213.8,90.4 L757.6,404.4M211.8,91.6 L755.5,405.6M207.6,94 L751.3,408M205.5,95.2 L749.2,409.2M203.4,96.4 L747.2,410.4M201.3,97.6 L745.1,411.6M197.2,100 L740.9,414M195.1,101.2 L738.8,415.2M193,102.4 L736.7,416.4M190.9,103.6 L734.6,417.6M186.8,106 L730.5,420M184.7,107.3 L728.4,421.2M182.6,108.5 L726.3,422.4M180.5,109.7 L724.2,423.6M176.3,112.1 L720,426M174.3,113.3 L717.9,427.2M172.2,114.5 L715.8,428.4M170.1,115.7 L713.8,429.6M165.9,118.1 L709.6,432.1M163.8,119.3 L707.5,433.3M161.8,120.5 L705.4,434.5M159.7,121.7 L703.3,435.7M155.5,124.2 L699.2,438.1M153.4,125.4 L697.1,439.3M151.4,126.6 L695,440.5M149.3,127.8 L692.9,441.7M145.1,130.2 L688.7,444.1M143,131.4 L686.6,445.3M140.9,132.6 L684.5,446.5" stroke="#e3e3e3" stroke-width="0.46" fill="none"/>
<path d="M149.3,138.7 L690.3,-174.7M159.8,144.7 L700.8,-168.7M170.3,150.8 L711.3,-162.6M180.8,156.8 L721.8,-156.5M191.3,162.9 L732.3,-150.5M201.8,168.9 L742.8,-144.4M212.3,175 L753.3,-138.3M222.7,181 L763.8,-132.3M233.2,187.1 L774.3,-126.2M243.7,193.2 L784.8,-120.1M254.2,199.2 L795.3,-114M264.7,205.3 L805.8,-108M275.2,211.3 L816.4,-101.9M285.7,217.4 L826.9,-95.8M296.2,223.4 L837.4,-89.8M306.6,229.5 L847.9,-83.7M317.1,235.5 L858.4,-77.6M327.6,241.6 L868.9,-71.6M338.1,247.7 L879.4,-65.5M348.6,253.7 L889.9,-59.4M359.1,259.8 L900.4,-53.4M369.6,265.8 L910.9,-47.3M380,271.9 L921.4,-41.2M390.5,277.9 L931.9,-35.2M401,284 L942.4,-29.1M411.5,290 L953,-23M422,296.1 L963.5,-16.9M432.5,302.1 L974,-10.9M443,308.2 L984.5,-4.8M453.4,314.3 L995,1.3M463.9,320.3 L1005.5,7.3M474.4,326.4 L1016,13.4M484.9,332.4 L1026.5,19.5M495.4,338.5 L1037,25.5M505.9,344.5 L1047.5,31.6M516.4,350.6 L1058,37.7M526.8,356.6 L1068.5,43.7M537.3,362.7 L1079,49.8M547.8,368.8 L1089.5,55.9M558.3,374.8 L1100.1,61.9M568.8,380.9 L1110.6,68M579.3,386.9 L1121.1,74.1M589.8,393 L1131.6,80.2M600.2,399 L1142.1,86.2M610.7,405.1 L1152.6,92.3M621.2,411.1 L1163.1,98.4M631.7,417.2 L1173.6,104.4M642.2,423.2 L1184.1,110.5M652.7,429.3 L1194.6,116.6M663.2,435.4 L1205.1,122.6M673.6,441.4 L1215.6,128.7M684.1,447.5 L1226.1,134.8M679.3,-179.4 L1224,135.2M668.9,-173.3 L1213.6,141.3M658.4,-167.2 L1203.1,147.3M648,-161.2 L1192.6,153.4M637.5,-155.1 L1182.1,159.4M627.1,-149.1 L1171.7,165.5M616.6,-143 L1161.2,171.5M606.2,-137 L1150.7,177.5M595.7,-130.9 L1140.2,183.6M585.3,-124.8 L1129.8,189.6M574.8,-118.8 L1119.3,195.7M564.4,-112.7 L1108.8,201.7M553.9,-106.7 L1098.4,207.7M543.5,-100.6 L1087.9,213.8M533,-94.6 L1077.4,219.8M522.6,-88.5 L1067,225.9M512.1,-82.5 L1056.5,231.9M501.7,-76.4 L1046,237.9M491.3,-70.4 L1035.6,244M480.8,-64.3 L1025.1,250M470.4,-58.3 L1014.7,256M459.9,-52.2 L1004.2,262.1M449.5,-46.2 L993.7,268.1M439.1,-40.1 L983.3,274.1M428.6,-34.1 L972.8,280.2M418.2,-28 L962.4,286.2M407.8,-22 L951.9,292.2M397.3,-16 L941.5,298.3M386.9,-9.9 L931,304.3M376.5,-3.9 L920.6,310.3M366,2.2 L910.1,316.4M355.6,8.2 L899.6,322.4M345.2,14.3 L889.2,328.4M334.8,20.3 L878.7,334.5M324.3,26.3 L868.3,340.5M313.9,32.4 L857.9,346.5M303.5,38.4 L847.4,352.5M293,44.5 L837,358.6M282.6,50.5 L826.5,364.6M272.2,56.5 L816.1,370.6M261.8,62.6 L805.6,376.6M251.4,68.6 L795.2,382.7M240.9,74.7 L784.7,388.7M230.5,80.7 L774.3,394.7M220.1,86.7 L763.9,400.7M209.7,92.8 L753.4,406.8M199.3,98.8 L743,412.8M188.8,104.8 L732.5,418.8M178.4,110.9 L722.1,424.8M168,116.9 L711.7,430.8M157.6,122.9 L701.2,436.9M147.2,129 L690.8,442.9" stroke="#b4b4b4" stroke-width="0.72" fill="none"/>
<polygon points="139.9,133.2 683.5,447.1 1225.5,134.4 680.8,-180.2" fill="none" stroke="#767676" stroke-width="0.9"/>
<line x1="345.2" y1="14.3" x2="889.2" y2="328.4" stroke="#f08080" stroke-width="1"/><line x1="837.4" y1="-89.8" x2="296.2" y2="223.4" stroke="#8f8fe8" stroke-width="1"/>
<g font-family="DejaVu Sans Light, DejaVu Sans, Liberation Sans, sans-serif" font-weight="200" font-size="11.6" fill="#3c3c3c" opacity="0.98"><text transform="matrix(0.831 -0.481 0.831 0.480 149.3 138.7)" x="-3.5" y="4" text-anchor="end">140</text>
<text transform="matrix(0.831 -0.481 0.831 0.480 159.8 144.7)" x="-3.5" y="4" text-anchor="end">130</text>
<text transform="matrix(0.831 -0.481 0.831 0.480 170.3 150.8)" x="-3.5" y="4" text-anchor="end">120</text>
<text transform="matrix(0.831 -0.481 0.831 0.480 180.8 156.8)" x="-3.5" y="4" text-anchor="end">110</text>
<text transform="matrix(0.831 -0.481 0.831 0.480 191.3 162.9)" x="-3.5" y="4" text-anchor="end">100</text>
<text transform="matrix(0.831 -0.481 0.831 0.480 201.8 168.9)" x="-3.5" y="4" text-anchor="end">90</text>
<text transform="matrix(0.831 -0.481 0.831 0.480 212.3 175)" x="-3.5" y="4" text-anchor="end">80</text>
<text transform="matrix(0.831 -0.481 0.831 0.480 222.7 181)" x="-3.5" y="4" text-anchor="end">70</text>
<text transform="matrix(0.831 -0.481 0.831 0.480 233.2 187.1)" x="-3.5" y="4" text-anchor="end">60</text>
<text transform="matrix(0.831 -0.481 0.831 0.480 243.7 193.2)" x="-3.5" y="4" text-anchor="end">50</text>
<text transform="matrix(0.831 -0.481 0.831 0.480 254.2 199.2)" x="-3.5" y="4" text-anchor="end">40</text>
<text transform="matrix(0.831 -0.481 0.831 0.480 264.7 205.3)" x="-3.5" y="4" text-anchor="end">30</text>
<text transform="matrix(0.831 -0.481 0.831 0.480 275.2 211.3)" x="-3.5" y="4" text-anchor="end">20</text>
<text transform="matrix(0.831 -0.481 0.831 0.480 285.7 217.4)" x="-3.5" y="4" text-anchor="end">10</text>
<text transform="matrix(0.831 -0.481 0.831 0.480 296.2 223.4)" x="-3.5" y="4" text-anchor="end">0</text>
<text transform="matrix(0.831 -0.481 0.831 0.480 306.6 229.5)" x="-3.5" y="4" text-anchor="end">10</text>
<text transform="matrix(0.831 -0.481 0.831 0.480 317.1 235.5)" x="-3.5" y="4" text-anchor="end">20</text>
<text transform="matrix(0.831 -0.481 0.831 0.480 327.6 241.6)" x="-3.5" y="4" text-anchor="end">30</text>
<text transform="matrix(0.831 -0.481 0.831 0.480 338.1 247.7)" x="-3.5" y="4" text-anchor="end">40</text>
<text transform="matrix(0.831 -0.481 0.831 0.480 348.6 253.7)" x="-3.5" y="4" text-anchor="end">50</text>
<text transform="matrix(0.831 -0.481 0.831 0.480 359.1 259.8)" x="-3.5" y="4" text-anchor="end">60</text>
<text transform="matrix(0.831 -0.481 0.831 0.480 369.6 265.8)" x="-3.5" y="4" text-anchor="end">70</text>
<text transform="matrix(0.831 -0.481 0.831 0.480 380 271.9)" x="-3.5" y="4" text-anchor="end">80</text>
<text transform="matrix(0.831 -0.481 0.831 0.480 390.5 277.9)" x="-3.5" y="4" text-anchor="end">90</text>
<text transform="matrix(0.831 -0.481 0.831 0.480 401 284)" x="-3.5" y="4" text-anchor="end">100</text>
<text transform="matrix(0.831 -0.481 0.831 0.480 411.5 290)" x="-3.5" y="4" text-anchor="end">110</text>
<text transform="matrix(0.831 -0.480 0.831 0.480 422 296.1)" x="-3.5" y="4" text-anchor="end">120</text>
<text transform="matrix(0.831 -0.480 0.831 0.480 432.5 302.1)" x="-3.5" y="4" text-anchor="end">130</text>
<text transform="matrix(0.831 -0.480 0.831 0.480 443 308.2)" x="-3.5" y="4" text-anchor="end">140</text>
<text transform="matrix(0.831 -0.480 0.831 0.480 453.4 314.3)" x="-3.5" y="4" text-anchor="end">150</text>
<text transform="matrix(0.831 -0.480 0.831 0.480 463.9 320.3)" x="-3.5" y="4" text-anchor="end">160</text>
<text transform="matrix(0.831 -0.480 0.831 0.480 474.4 326.4)" x="-3.5" y="4" text-anchor="end">170</text>
<text transform="matrix(0.831 -0.480 0.831 0.480 484.9 332.4)" x="-3.5" y="4" text-anchor="end">180</text>
<text transform="matrix(0.831 -0.480 0.831 0.480 495.4 338.5)" x="-3.5" y="4" text-anchor="end">190</text>
<text transform="matrix(0.831 -0.480 0.831 0.480 505.9 344.5)" x="-3.5" y="4" text-anchor="end">200</text>
<text transform="matrix(0.831 -0.480 0.831 0.480 516.4 350.6)" x="-3.5" y="4" text-anchor="end">210</text>
<text transform="matrix(0.831 -0.480 0.831 0.480 526.8 356.6)" x="-3.5" y="4" text-anchor="end">220</text>
<text transform="matrix(0.831 -0.480 0.831 0.480 537.3 362.7)" x="-3.5" y="4" text-anchor="end">230</text>
<text transform="matrix(0.831 -0.480 0.831 0.480 547.8 368.8)" x="-3.5" y="4" text-anchor="end">240</text>
<text transform="matrix(0.831 -0.480 0.831 0.480 558.3 374.8)" x="-3.5" y="4" text-anchor="end">250</text>
<text transform="matrix(0.831 -0.480 0.831 0.480 568.8 380.9)" x="-3.5" y="4" text-anchor="end">260</text>
<text transform="matrix(0.831 -0.480 0.831 0.480 579.3 386.9)" x="-3.5" y="4" text-anchor="end">270</text>
<text transform="matrix(0.831 -0.480 0.831 0.480 589.8 393)" x="-3.5" y="4" text-anchor="end">280</text>
<text transform="matrix(0.831 -0.480 0.831 0.480 600.2 399)" x="-3.5" y="4" text-anchor="end">290</text>
<text transform="matrix(0.831 -0.480 0.831 0.480 610.7 405.1)" x="-3.5" y="4" text-anchor="end">300</text>
<text transform="matrix(0.831 -0.480 0.831 0.480 621.2 411.1)" x="-3.5" y="4" text-anchor="end">310</text>
<text transform="matrix(0.831 -0.480 0.831 0.480 631.7 417.2)" x="-3.5" y="4" text-anchor="end">320</text>
<text transform="matrix(0.831 -0.480 0.831 0.480 642.2 423.2)" x="-3.5" y="4" text-anchor="end">330</text>
<text transform="matrix(0.831 -0.480 0.831 0.480 652.7 429.3)" x="-3.5" y="4" text-anchor="end">340</text>
<text transform="matrix(0.831 -0.480 0.831 0.480 663.2 435.4)" x="-3.5" y="4" text-anchor="end">350</text>
<text transform="matrix(0.832 -0.480 0.831 0.480 673.6 441.4)" x="-3.5" y="4" text-anchor="end">360</text>
<text transform="matrix(0.832 -0.480 0.831 0.480 684.1 447.5)" x="-3.5" y="4" text-anchor="end">370</text>
<text transform="matrix(0.831 0.480 -0.832 0.480 1224 135.2)" x="4" y="6">320</text>
<text transform="matrix(0.831 0.480 -0.832 0.480 1213.6 141.3)" x="4" y="6">310</text>
<text transform="matrix(0.831 0.480 -0.832 0.480 1203.1 147.3)" x="4" y="6">300</text>
<text transform="matrix(0.831 0.480 -0.832 0.480 1192.6 153.4)" x="4" y="6">290</text>
<text transform="matrix(0.831 0.480 -0.832 0.480 1182.1 159.4)" x="4" y="6">280</text>
<text transform="matrix(0.831 0.480 -0.832 0.480 1171.7 165.5)" x="4" y="6">270</text>
<text transform="matrix(0.831 0.480 -0.832 0.480 1161.2 171.5)" x="4" y="6">260</text>
<text transform="matrix(0.831 0.480 -0.832 0.480 1150.7 177.5)" x="4" y="6">250</text>
<text transform="matrix(0.831 0.480 -0.832 0.480 1140.2 183.6)" x="4" y="6">240</text>
<text transform="matrix(0.831 0.480 -0.832 0.480 1129.8 189.6)" x="4" y="6">230</text>
<text transform="matrix(0.831 0.480 -0.832 0.480 1119.3 195.7)" x="4" y="6">220</text>
<text transform="matrix(0.831 0.480 -0.832 0.480 1108.8 201.7)" x="4" y="6">210</text>
<text transform="matrix(0.831 0.480 -0.832 0.480 1098.4 207.7)" x="4" y="6">200</text>
<text transform="matrix(0.831 0.480 -0.832 0.480 1087.9 213.8)" x="4" y="6">190</text>
<text transform="matrix(0.831 0.480 -0.832 0.480 1077.4 219.8)" x="4" y="6">180</text>
<text transform="matrix(0.831 0.480 -0.832 0.480 1067 225.9)" x="4" y="6">170</text>
<text transform="matrix(0.831 0.480 -0.832 0.480 1056.5 231.9)" x="4" y="6">160</text>
<text transform="matrix(0.831 0.480 -0.832 0.480 1046 237.9)" x="4" y="6">150</text>
<text transform="matrix(0.831 0.480 -0.832 0.480 1035.6 244)" x="4" y="6">140</text>
<text transform="matrix(0.831 0.480 -0.832 0.480 1025.1 250)" x="4" y="6">130</text>
<text transform="matrix(0.831 0.480 -0.832 0.480 1014.7 256)" x="4" y="6">120</text>
<text transform="matrix(0.831 0.480 -0.832 0.480 1004.2 262.1)" x="4" y="6">110</text>
<text transform="matrix(0.831 0.480 -0.832 0.480 993.7 268.1)" x="4" y="6">100</text>
<text transform="matrix(0.831 0.480 -0.832 0.480 983.3 274.1)" x="4" y="6">90</text>
<text transform="matrix(0.831 0.480 -0.832 0.480 972.8 280.2)" x="4" y="6">80</text>
<text transform="matrix(0.831 0.480 -0.832 0.480 962.4 286.2)" x="4" y="6">70</text>
<text transform="matrix(0.831 0.480 -0.832 0.480 951.9 292.2)" x="4" y="6">60</text>
<text transform="matrix(0.831 0.480 -0.832 0.480 941.5 298.3)" x="4" y="6">50</text>
<text transform="matrix(0.831 0.480 -0.832 0.480 931 304.3)" x="4" y="6">40</text>
<text transform="matrix(0.831 0.480 -0.832 0.480 920.6 310.3)" x="4" y="6">30</text>
<text transform="matrix(0.831 0.480 -0.832 0.480 910.1 316.4)" x="4" y="6">20</text>
<text transform="matrix(0.831 0.480 -0.832 0.480 899.6 322.4)" x="4" y="6">10</text>
<text transform="matrix(0.831 0.480 -0.832 0.480 889.2 328.4)" x="4" y="6">0</text>
<text transform="matrix(0.831 0.480 -0.832 0.480 878.7 334.5)" x="4" y="6">10</text>
<text transform="matrix(0.831 0.480 -0.832 0.480 868.3 340.5)" x="4" y="6">20</text>
<text transform="matrix(0.831 0.480 -0.832 0.480 857.9 346.5)" x="4" y="6">30</text>
<text transform="matrix(0.831 0.480 -0.832 0.480 847.4 352.5)" x="4" y="6">40</text>
<text transform="matrix(0.831 0.480 -0.832 0.480 837 358.6)" x="4" y="6">50</text>
<text transform="matrix(0.831 0.480 -0.832 0.480 826.5 364.6)" x="4" y="6">60</text>
<text transform="matrix(0.831 0.480 -0.832 0.480 816.1 370.6)" x="4" y="6">70</text>
<text transform="matrix(0.831 0.480 -0.832 0.480 805.6 376.6)" x="4" y="6">80</text>
<text transform="matrix(0.831 0.480 -0.832 0.480 795.2 382.7)" x="4" y="6">90</text>
<text transform="matrix(0.831 0.480 -0.832 0.480 784.7 388.7)" x="4" y="6">100</text>
<text transform="matrix(0.831 0.480 -0.832 0.480 774.3 394.7)" x="4" y="6">110</text>
<text transform="matrix(0.831 0.480 -0.832 0.480 763.9 400.7)" x="4" y="6">120</text>
<text transform="matrix(0.831 0.480 -0.832 0.480 753.4 406.8)" x="4" y="6">130</text>
<text transform="matrix(0.831 0.480 -0.832 0.480 743 412.8)" x="4" y="6">140</text>
<text transform="matrix(0.831 0.480 -0.832 0.480 732.5 418.8)" x="4" y="6">150</text>
<text transform="matrix(0.831 0.480 -0.832 0.480 722.1 424.8)" x="4" y="6">160</text>
<text transform="matrix(0.831 0.480 -0.832 0.480 711.7 430.8)" x="4" y="6">170</text>
<text transform="matrix(0.831 0.480 -0.832 0.480 701.2 436.9)" x="4" y="6">180</text>
<text transform="matrix(0.831 0.480 -0.832 0.480 690.8 442.9)" x="4" y="6">190</text></g>
<path d="M735.5,510.5 L861.1,436.3 L861.1,441.7 L735.5,516.5 Z" fill="#55534c" stroke="#1a1a18" stroke-width="1" stroke-linejoin="round"/>
<path d="M736.5,512.7 L861.1,438.7" stroke="#8a887f" stroke-width="1.6" fill="none"/>
<path id="p2" d="M502.1,375.3 Q501.8,373.7 503.8,372.6 L551.8,344.9 Q554.8,343 557.8,343.6 L569.8,346.5 Q573.1,347.5 573.1,350.7 L573.1,353.6 Q564.6,359.6 566.1,361.6 Q567.6,363.3 571.6,363.7 L858.9,432.7 Q861.4,433.3 861.4,435.7 L861.1,436.3 L735.5,510.5 L503.1,377.5 Z" fill="url(#pg)" stroke="#151513" stroke-width="0.6" stroke-linejoin="round"/>
<path d="M573.1,350.7 L573.1,353.6 Q564.6,359.6 566.1,361.6 Q567.6,363.3 571.6,363.7 Q573.5,360.1 573.1,350.7 Z" fill="#2a2824" opacity="0.3"/>
<g clip-path="url(#c2)">
<polygon points="139.9,133.2 683.5,447.1 1225.5,134.4 680.8,-180.2" fill="#807e76" fill-opacity="0.12" stroke="#3c3b36" stroke-opacity="0.5" stroke-width="1"/>
<path d="M149.3,138.7 L690.3,-174.7M159.8,144.7 L700.8,-168.7M170.3,150.8 L711.3,-162.6M180.8,156.8 L721.8,-156.5M191.3,162.9 L732.3,-150.5M201.8,168.9 L742.8,-144.4M212.3,175 L753.3,-138.3M222.7,181 L763.8,-132.3M233.2,187.1 L774.3,-126.2M243.7,193.2 L784.8,-120.1M254.2,199.2 L795.3,-114M264.7,205.3 L805.8,-108M275.2,211.3 L816.4,-101.9M285.7,217.4 L826.9,-95.8M296.2,223.4 L837.4,-89.8M306.6,229.5 L847.9,-83.7M317.1,235.5 L858.4,-77.6M327.6,241.6 L868.9,-71.6M338.1,247.7 L879.4,-65.5M348.6,253.7 L889.9,-59.4M359.1,259.8 L900.4,-53.4M369.6,265.8 L910.9,-47.3M380,271.9 L921.4,-41.2M390.5,277.9 L931.9,-35.2M401,284 L942.4,-29.1M411.5,290 L953,-23M422,296.1 L963.5,-16.9M432.5,302.1 L974,-10.9M443,308.2 L984.5,-4.8M453.4,314.3 L995,1.3M463.9,320.3 L1005.5,7.3M474.4,326.4 L1016,13.4M484.9,332.4 L1026.5,19.5M495.4,338.5 L1037,25.5M505.9,344.5 L1047.5,31.6M516.4,350.6 L1058,37.7M526.8,356.6 L1068.5,43.7M537.3,362.7 L1079,49.8M547.8,368.8 L1089.5,55.9M558.3,374.8 L1100.1,61.9M568.8,380.9 L1110.6,68M579.3,386.9 L1121.1,74.1M589.8,393 L1131.6,80.2M600.2,399 L1142.1,86.2M610.7,405.1 L1152.6,92.3M621.2,411.1 L1163.1,98.4M631.7,417.2 L1173.6,104.4M642.2,423.2 L1184.1,110.5M652.7,429.3 L1194.6,116.6M663.2,435.4 L1205.1,122.6M673.6,441.4 L1215.6,128.7M684.1,447.5 L1226.1,134.8M679.3,-179.4 L1224,135.2M668.9,-173.3 L1213.6,141.3M658.4,-167.2 L1203.1,147.3M648,-161.2 L1192.6,153.4M637.5,-155.1 L1182.1,159.4M627.1,-149.1 L1171.7,165.5M616.6,-143 L1161.2,171.5M606.2,-137 L1150.7,177.5M595.7,-130.9 L1140.2,183.6M585.3,-124.8 L1129.8,189.6M574.8,-118.8 L1119.3,195.7M564.4,-112.7 L1108.8,201.7M553.9,-106.7 L1098.4,207.7M543.5,-100.6 L1087.9,213.8M533,-94.6 L1077.4,219.8M522.6,-88.5 L1067,225.9M512.1,-82.5 L1056.5,231.9M501.7,-76.4 L1046,237.9M491.3,-70.4 L1035.6,244M480.8,-64.3 L1025.1,250M470.4,-58.3 L1014.7,256M459.9,-52.2 L1004.2,262.1M449.5,-46.2 L993.7,268.1M439.1,-40.1 L983.3,274.1M428.6,-34.1 L972.8,280.2M418.2,-28 L962.4,286.2M407.8,-22 L951.9,292.2M397.3,-16 L941.5,298.3M386.9,-9.9 L931,304.3M376.5,-3.9 L920.6,310.3M366,2.2 L910.1,316.4M355.6,8.2 L899.6,322.4M345.2,14.3 L889.2,328.4M334.8,20.3 L878.7,334.5M324.3,26.3 L868.3,340.5M313.9,32.4 L857.9,346.5M303.5,38.4 L847.4,352.5M293,44.5 L837,358.6M282.6,50.5 L826.5,364.6M272.2,56.5 L816.1,370.6M261.8,62.6 L805.6,376.6M251.4,68.6 L795.2,382.7M240.9,74.7 L784.7,388.7M230.5,80.7 L774.3,394.7M220.1,86.7 L763.9,400.7M209.7,92.8 L753.4,406.8M199.3,98.8 L743,412.8M188.8,104.8 L732.5,418.8M178.4,110.9 L722.1,424.8M168,116.9 L711.7,430.8M157.6,122.9 L701.2,436.9M147.2,129 L690.8,442.9" stroke="#4a4842" stroke-opacity="0.3" stroke-width="0.7" fill="none"/>
<g opacity="0.85"><g font-family="DejaVu Sans Light, DejaVu Sans, Liberation Sans, sans-serif" font-weight="200" font-size="11.6" fill="#2a2926" opacity="0.98"><text transform="matrix(0.831 -0.481 0.831 0.480 149.3 138.7)" x="-3.5" y="4" text-anchor="end">140</text>
<text transform="matrix(0.831 -0.481 0.831 0.480 159.8 144.7)" x="-3.5" y="4" text-anchor="end">130</text>
<text transform="matrix(0.831 -0.481 0.831 0.480 170.3 150.8)" x="-3.5" y="4" text-anchor="end">120</text>
<text transform="matrix(0.831 -0.481 0.831 0.480 180.8 156.8)" x="-3.5" y="4" text-anchor="end">110</text>
<text transform="matrix(0.831 -0.481 0.831 0.480 191.3 162.9)" x="-3.5" y="4" text-anchor="end">100</text>
<text transform="matrix(0.831 -0.481 0.831 0.480 201.8 168.9)" x="-3.5" y="4" text-anchor="end">90</text>
<text transform="matrix(0.831 -0.481 0.831 0.480 212.3 175)" x="-3.5" y="4" text-anchor="end">80</text>
<text transform="matrix(0.831 -0.481 0.831 0.480 222.7 181)" x="-3.5" y="4" text-anchor="end">70</text>
<text transform="matrix(0.831 -0.481 0.831 0.480 233.2 187.1)" x="-3.5" y="4" text-anchor="end">60</text>
<text transform="matrix(0.831 -0.481 0.831 0.480 243.7 193.2)" x="-3.5" y="4" text-anchor="end">50</text>
<text transform="matrix(0.831 -0.481 0.831 0.480 254.2 199.2)" x="-3.5" y="4" text-anchor="end">40</text>
<text transform="matrix(0.831 -0.481 0.831 0.480 264.7 205.3)" x="-3.5" y="4" text-anchor="end">30</text>
<text transform="matrix(0.831 -0.481 0.831 0.480 275.2 211.3)" x="-3.5" y="4" text-anchor="end">20</text>
<text transform="matrix(0.831 -0.481 0.831 0.480 285.7 217.4)" x="-3.5" y="4" text-anchor="end">10</text>
<text transform="matrix(0.831 -0.481 0.831 0.480 296.2 223.4)" x="-3.5" y="4" text-anchor="end">0</text>
<text transform="matrix(0.831 -0.481 0.831 0.480 306.6 229.5)" x="-3.5" y="4" text-anchor="end">10</text>
<text transform="matrix(0.831 -0.481 0.831 0.480 317.1 235.5)" x="-3.5" y="4" text-anchor="end">20</text>
<text transform="matrix(0.831 -0.481 0.831 0.480 327.6 241.6)" x="-3.5" y="4" text-anchor="end">30</text>
<text transform="matrix(0.831 -0.481 0.831 0.480 338.1 247.7)" x="-3.5" y="4" text-anchor="end">40</text>
<text transform="matrix(0.831 -0.481 0.831 0.480 348.6 253.7)" x="-3.5" y="4" text-anchor="end">50</text>
<text transform="matrix(0.831 -0.481 0.831 0.480 359.1 259.8)" x="-3.5" y="4" text-anchor="end">60</text>
<text transform="matrix(0.831 -0.481 0.831 0.480 369.6 265.8)" x="-3.5" y="4" text-anchor="end">70</text>
<text transform="matrix(0.831 -0.481 0.831 0.480 380 271.9)" x="-3.5" y="4" text-anchor="end">80</text>
<text transform="matrix(0.831 -0.481 0.831 0.480 390.5 277.9)" x="-3.5" y="4" text-anchor="end">90</text>
<text transform="matrix(0.831 -0.481 0.831 0.480 401 284)" x="-3.5" y="4" text-anchor="end">100</text>
<text transform="matrix(0.831 -0.481 0.831 0.480 411.5 290)" x="-3.5" y="4" text-anchor="end">110</text>
<text transform="matrix(0.831 -0.480 0.831 0.480 422 296.1)" x="-3.5" y="4" text-anchor="end">120</text>
<text transform="matrix(0.831 -0.480 0.831 0.480 432.5 302.1)" x="-3.5" y="4" text-anchor="end">130</text>
<text transform="matrix(0.831 -0.480 0.831 0.480 443 308.2)" x="-3.5" y="4" text-anchor="end">140</text>
<text transform="matrix(0.831 -0.480 0.831 0.480 453.4 314.3)" x="-3.5" y="4" text-anchor="end">150</text>
<text transform="matrix(0.831 -0.480 0.831 0.480 463.9 320.3)" x="-3.5" y="4" text-anchor="end">160</text>
<text transform="matrix(0.831 -0.480 0.831 0.480 474.4 326.4)" x="-3.5" y="4" text-anchor="end">170</text>
<text transform="matrix(0.831 -0.480 0.831 0.480 484.9 332.4)" x="-3.5" y="4" text-anchor="end">180</text>
<text transform="matrix(0.831 -0.480 0.831 0.480 495.4 338.5)" x="-3.5" y="4" text-anchor="end">190</text>
<text transform="matrix(0.831 -0.480 0.831 0.480 505.9 344.5)" x="-3.5" y="4" text-anchor="end">200</text>
<text transform="matrix(0.831 -0.480 0.831 0.480 516.4 350.6)" x="-3.5" y="4" text-anchor="end">210</text>
<text transform="matrix(0.831 -0.480 0.831 0.480 526.8 356.6)" x="-3.5" y="4" text-anchor="end">220</text>
<text transform="matrix(0.831 -0.480 0.831 0.480 537.3 362.7)" x="-3.5" y="4" text-anchor="end">230</text>
<text transform="matrix(0.831 -0.480 0.831 0.480 547.8 368.8)" x="-3.5" y="4" text-anchor="end">240</text>
<text transform="matrix(0.831 -0.480 0.831 0.480 558.3 374.8)" x="-3.5" y="4" text-anchor="end">250</text>
<text transform="matrix(0.831 -0.480 0.831 0.480 568.8 380.9)" x="-3.5" y="4" text-anchor="end">260</text>
<text transform="matrix(0.831 -0.480 0.831 0.480 579.3 386.9)" x="-3.5" y="4" text-anchor="end">270</text>
<text transform="matrix(0.831 -0.480 0.831 0.480 589.8 393)" x="-3.5" y="4" text-anchor="end">280</text>
<text transform="matrix(0.831 -0.480 0.831 0.480 600.2 399)" x="-3.5" y="4" text-anchor="end">290</text>
<text transform="matrix(0.831 -0.480 0.831 0.480 610.7 405.1)" x="-3.5" y="4" text-anchor="end">300</text>
<text transform="matrix(0.831 -0.480 0.831 0.480 621.2 411.1)" x="-3.5" y="4" text-anchor="end">310</text>
<text transform="matrix(0.831 -0.480 0.831 0.480 631.7 417.2)" x="-3.5" y="4" text-anchor="end">320</text>
<text transform="matrix(0.831 -0.480 0.831 0.480 642.2 423.2)" x="-3.5" y="4" text-anchor="end">330</text>
<text transform="matrix(0.831 -0.480 0.831 0.480 652.7 429.3)" x="-3.5" y="4" text-anchor="end">340</text>
<text transform="matrix(0.831 -0.480 0.831 0.480 663.2 435.4)" x="-3.5" y="4" text-anchor="end">350</text>
<text transform="matrix(0.832 -0.480 0.831 0.480 673.6 441.4)" x="-3.5" y="4" text-anchor="end">360</text>
<text transform="matrix(0.832 -0.480 0.831 0.480 684.1 447.5)" x="-3.5" y="4" text-anchor="end">370</text>
<text transform="matrix(0.831 0.480 -0.832 0.480 1224 135.2)" x="4" y="6">320</text>
<text transform="matrix(0.831 0.480 -0.832 0.480 1213.6 141.3)" x="4" y="6">310</text>
<text transform="matrix(0.831 0.480 -0.832 0.480 1203.1 147.3)" x="4" y="6">300</text>
<text transform="matrix(0.831 0.480 -0.832 0.480 1192.6 153.4)" x="4" y="6">290</text>
<text transform="matrix(0.831 0.480 -0.832 0.480 1182.1 159.4)" x="4" y="6">280</text>
<text transform="matrix(0.831 0.480 -0.832 0.480 1171.7 165.5)" x="4" y="6">270</text>
<text transform="matrix(0.831 0.480 -0.832 0.480 1161.2 171.5)" x="4" y="6">260</text>
<text transform="matrix(0.831 0.480 -0.832 0.480 1150.7 177.5)" x="4" y="6">250</text>
<text transform="matrix(0.831 0.480 -0.832 0.480 1140.2 183.6)" x="4" y="6">240</text>
<text transform="matrix(0.831 0.480 -0.832 0.480 1129.8 189.6)" x="4" y="6">230</text>
<text transform="matrix(0.831 0.480 -0.832 0.480 1119.3 195.7)" x="4" y="6">220</text>
<text transform="matrix(0.831 0.480 -0.832 0.480 1108.8 201.7)" x="4" y="6">210</text>
<text transform="matrix(0.831 0.480 -0.832 0.480 1098.4 207.7)" x="4" y="6">200</text>
<text transform="matrix(0.831 0.480 -0.832 0.480 1087.9 213.8)" x="4" y="6">190</text>
<text transform="matrix(0.831 0.480 -0.832 0.480 1077.4 219.8)" x="4" y="6">180</text>
<text transform="matrix(0.831 0.480 -0.832 0.480 1067 225.9)" x="4" y="6">170</text>
<text transform="matrix(0.831 0.480 -0.832 0.480 1056.5 231.9)" x="4" y="6">160</text>
<text transform="matrix(0.831 0.480 -0.832 0.480 1046 237.9)" x="4" y="6">150</text>
<text transform="matrix(0.831 0.480 -0.832 0.480 1035.6 244)" x="4" y="6">140</text>
<text transform="matrix(0.831 0.480 -0.832 0.480 1025.1 250)" x="4" y="6">130</text>
<text transform="matrix(0.831 0.480 -0.832 0.480 1014.7 256)" x="4" y="6">120</text>
<text transform="matrix(0.831 0.480 -0.832 0.480 1004.2 262.1)" x="4" y="6">110</text>
<text transform="matrix(0.831 0.480 -0.832 0.480 993.7 268.1)" x="4" y="6">100</text>
<text transform="matrix(0.831 0.480 -0.832 0.480 983.3 274.1)" x="4" y="6">90</text>
<text transform="matrix(0.831 0.480 -0.832 0.480 972.8 280.2)" x="4" y="6">80</text>
<text transform="matrix(0.831 0.480 -0.832 0.480 962.4 286.2)" x="4" y="6">70</text>
<text transform="matrix(0.831 0.480 -0.832 0.480 951.9 292.2)" x="4" y="6">60</text>
<text transform="matrix(0.831 0.480 -0.832 0.480 941.5 298.3)" x="4" y="6">50</text>
<text transform="matrix(0.831 0.480 -0.832 0.480 931 304.3)" x="4" y="6">40</text>
<text transform="matrix(0.831 0.480 -0.832 0.480 920.6 310.3)" x="4" y="6">30</text>
<text transform="matrix(0.831 0.480 -0.832 0.480 910.1 316.4)" x="4" y="6">20</text>
<text transform="matrix(0.831 0.480 -0.832 0.480 899.6 322.4)" x="4" y="6">10</text>
<text transform="matrix(0.831 0.480 -0.832 0.480 889.2 328.4)" x="4" y="6">0</text>
<text transform="matrix(0.831 0.480 -0.832 0.480 878.7 334.5)" x="4" y="6">10</text>
<text transform="matrix(0.831 0.480 -0.832 0.480 868.3 340.5)" x="4" y="6">20</text>
<text transform="matrix(0.831 0.480 -0.832 0.480 857.9 346.5)" x="4" y="6">30</text>
<text transform="matrix(0.831 0.480 -0.832 0.480 847.4 352.5)" x="4" y="6">40</text>
<text transform="matrix(0.831 0.480 -0.832 0.480 837 358.6)" x="4" y="6">50</text>
<text transform="matrix(0.831 0.480 -0.832 0.480 826.5 364.6)" x="4" y="6">60</text>
<text transform="matrix(0.831 0.480 -0.832 0.480 816.1 370.6)" x="4" y="6">70</text>
<text transform="matrix(0.831 0.480 -0.832 0.480 805.6 376.6)" x="4" y="6">80</text>
<text transform="matrix(0.831 0.480 -0.832 0.480 795.2 382.7)" x="4" y="6">90</text>
<text transform="matrix(0.831 0.480 -0.832 0.480 784.7 388.7)" x="4" y="6">100</text>
<text transform="matrix(0.831 0.480 -0.832 0.480 774.3 394.7)" x="4" y="6">110</text>
<text transform="matrix(0.831 0.480 -0.832 0.480 763.9 400.7)" x="4" y="6">120</text>
<text transform="matrix(0.831 0.480 -0.832 0.480 753.4 406.8)" x="4" y="6">130</text>
<text transform="matrix(0.831 0.480 -0.832 0.480 743 412.8)" x="4" y="6">140</text>
<text transform="matrix(0.831 0.480 -0.832 0.480 732.5 418.8)" x="4" y="6">150</text>
<text transform="matrix(0.831 0.480 -0.832 0.480 722.1 424.8)" x="4" y="6">160</text>
<text transform="matrix(0.831 0.480 -0.832 0.480 711.7 430.8)" x="4" y="6">170</text>
<text transform="matrix(0.831 0.480 -0.832 0.480 701.2 436.9)" x="4" y="6">180</text>
<text transform="matrix(0.831 0.480 -0.832 0.480 690.8 442.9)" x="4" y="6">190</text></g></g>
</g>
<polygon points="428.5,341 492.3,305.8 492.3,377.5 428.5,412.6" fill="rgba(245,170,55,0.38)"/>
<polygon points="507.9,305.8 571.7,342.3 571.7,413.9 507.9,377.4" fill="rgba(245,170,55,0.38)"/>
<polygon points="500.1,393.1 562.6,429.5 500.1,465.5 438.4,429" fill="rgba(245,170,55,0.38)"/>
<path d="M502.1,375.3 Q501.8,373.7 503.8,372.6 L551.8,344.9 Q554.8,343 557.8,343.6 L569.8,346.5 Q573.1,347.5 573.1,350.7 L573.1,353.6 Q564.6,359.6 566.1,361.6 Q567.6,363.3 571.6,363.7 L858.9,432.7 Q861.4,433.3 861.4,435.7 L861.1,436.3 L735.5,510.5 L503.1,377.5 Z" fill="none" stroke="#111110" stroke-width="1.1" stroke-linejoin="round"/>
<path d="M573.1,350.7 L573.1,353.6 Q564.6,359.6 566.1,361.6 Q567.6,363.3 571.6,363.7 Q573.5,360.1 573.1,350.7 Z" fill="#2a2824" opacity="0.3"/>
<path d="M573.1,349.7 L573.4,357.3" fill="none" stroke="#111110" stroke-width="1.8" stroke-linecap="round"/>
<path d="M502.1,375.3 L503.1,377.5 L735.5,510.5 L735.5,516.5 L503.5,382.9 L502.1,379.7 Z" fill="#6a6a65" stroke="#1a1a18" stroke-width="1" stroke-linejoin="round"/>
<path d="M506.1,385.3 L573.1,423.7" stroke="#a00c18" stroke-width="1" fill="none"/><path d="M564.1,418.9 L575.1,425.2" stroke="#c01020" stroke-width="1.6" fill="none"/>
<path d="M500.2,292.8 V328 M500.2,331.9 V338.4 M500.2,343.6 V376.1" stroke="#22cc22" stroke-width="2.4" fill="none"/>
<path d="M494.9,386.6 L466.4,402.7 M461.2,406.1 L454.7,409.2 M449.4,412.6 L422.1,428.2" stroke="#1111cc" stroke-width="2.6" fill="none"/>
<circle cx="499.4" cy="382.7" r="5" fill="url(#sph)" stroke="#8a8a8a" stroke-width="1.3"/>
<path d="M737.4,232.4 L863,158.2 L863,163.6 L737.4,238.4 Z" fill="#55534c" stroke="#1a1a18" stroke-width="1" stroke-linejoin="round"/>
<path d="M738.4,234.6 L863,160.6" stroke="#8a887f" stroke-width="1.6" fill="none"/>
<path id="p1" d="M504,97.2 Q503.6,95.6 505.6,94.5 L553.6,66.8 Q556.6,64.9 559.6,65.5 L571.6,68.4 Q575,69.4 575,72.6 L575,75.5 Q566.5,81.5 568,83.5 Q569.5,85.2 573.5,85.6 L860.8,154.6 Q863.2,155.2 863.2,157.6 L863,158.2 L737.4,232.4 L505,99.4 Z" fill="url(#pg)" stroke="#151513" stroke-width="0.6" stroke-linejoin="round"/>
<path d="M575,72.6 L575,75.5 Q566.5,81.5 568,83.5 Q569.5,85.2 573.5,85.6 Q575.4,82 575,72.6 Z" fill="#2a2824" opacity="0.3"/>
<polygon points="430.4,62.9 494.1,27.7 494.1,99.4 430.4,134.5" fill="rgba(245,170,55,0.38)"/>
<polygon points="509.8,27.7 573.5,64.2 573.5,135.8 509.8,99.3" fill="rgba(245,170,55,0.38)"/>
<polygon points="501.9,115 564.5,151.4 501.9,187.4 440.2,150.9" fill="rgba(245,170,55,0.38)"/>
<path d="M504,97.2 Q503.6,95.6 505.6,94.5 L553.6,66.8 Q556.6,64.9 559.6,65.5 L571.6,68.4 Q575,69.4 575,72.6 L575,75.5 Q566.5,81.5 568,83.5 Q569.5,85.2 573.5,85.6 L860.8,154.6 Q863.2,155.2 863.2,157.6 L863,158.2 L737.4,232.4 L505,99.4 Z" fill="none" stroke="#111110" stroke-width="1.1" stroke-linejoin="round"/>
<path d="M575,72.6 L575,75.5 Q566.5,81.5 568,83.5 Q569.5,85.2 573.5,85.6 Q575.4,82 575,72.6 Z" fill="#2a2824" opacity="0.3"/>
<path d="M575,71.6 L575.2,79.2" fill="none" stroke="#111110" stroke-width="1.8" stroke-linecap="round"/>
<path d="M504,97.2 L505,99.4 L737.4,232.4 L737.4,238.4 L505.4,104.8 L504,101.6 Z" fill="#83817a" stroke="#1a1a18" stroke-width="1" stroke-linejoin="round"/>
<path d="M506,106.2 L737.6,238.7" stroke="#a80c1a" stroke-width="1.3" fill="none"/><path d="M506,106.4 L575,145.9" stroke="#b00c1a" stroke-width="1.5" fill="none"/>
<path d="M502.1,14.7 V49.9 M502.1,53.8 V60.3 M502.1,65.5 V98" stroke="#22cc22" stroke-width="2.4" fill="none"/>
<path d="M496.8,108.5 L468.2,124.6 M463.1,128 L456.6,131.1 M451.2,134.5 L423.9,150.1" stroke="#1111cc" stroke-width="2.6" fill="none"/>
<circle cx="501.2" cy="104.6" r="5" fill="url(#sph)" stroke="#8a8a8a" stroke-width="1.3"/>
<g transform="translate(669.8,126.8)"><rect width="25.2" height="15.6" fill="#c9c9c4"/><rect y="9.4" width="25.2" height="6.2" fill="#7db0a6"/><path d="M4.4,9.6 V5.6 Q4.4,4.4 5.6,4.4 H8.8 Q10,4.4 10,5.6 V9.6 Z M14.3,9.6 V5.6 Q14.3,4.4 15.5,4.4 H18.8 Q20,4.4 20,5.6 V9.6 Z" fill="#79a898" stroke="#5b857a" stroke-width="0.7"/><rect width="25.2" height="15.6" fill="none" stroke="#6d7a72" stroke-width="0.6"/></g>
<ellipse cx="1324" cy="75" rx="22" ry="8" fill="#000" opacity="0.16" filter="url(#bl)"/>
<polygon points="1317.5,21.5 1344.4,33.8 1317.5,47.9 1290.5,33.8" fill="#f0f0f0" stroke="#858585" stroke-width="0.7" stroke-linejoin="round"/>
<polygon points="1290.5,33.8 1317.5,47.9 1317.5,79 1293.4,62.5" fill="url(#vc1)" stroke="#858585" stroke-width="0.7" stroke-linejoin="round"/>
<polygon points="1317.5,47.9 1344.4,33.8 1341.5,62 1317.5,79" fill="url(#vc2)" stroke="#858585" stroke-width="0.7" stroke-linejoin="round"/>
<text font-family="Liberation Sans, sans-serif" fill="#8a8a8a" font-size="6.5" text-anchor="middle" transform="matrix(0.85 0.45 -0.85 0.42 1315.6 36.6)">TOP</text>
<text font-family="Liberation Sans, sans-serif" fill="#8a8a8a" font-size="6.3" text-anchor="middle" transform="matrix(0.88 0.47 -0.06 1 1304.6 59)">FRONT</text>
<text font-family="Liberation Sans, sans-serif" fill="#8a8a8a" font-size="6.3" text-anchor="middle" transform="matrix(0.88 -0.47 -0.06 1 1331.2 58.2)">RIGHT</text>
<path d="M1317.5,15 V21" stroke="#7fe07f" stroke-width="2"/>
<path d="M1293.4,62.5 L1289.5,65" stroke="#7a7aee" stroke-width="2"/>
<path d="M1341.5,62 L1346,64.5" stroke="#f09a9a" stroke-width="2"/>
<text font-family="Liberation Sans, sans-serif" font-size="9.5" fill="#7fe07f" text-anchor="middle" x="1317.5" y="13.5">Y</text>
<text font-family="Liberation Sans, sans-serif" font-size="9.5" fill="#7a7aee" text-anchor="middle" x="1285" y="70.8">Z</text>
<text font-family="Liberation Sans, sans-serif" font-size="9.5" fill="#f09a9a" text-anchor="middle" x="1350" y="70.6">X</text>
</svg></div><div class="a" style="left:4px;top:141px;width:300px;height:25px;background:#f0f0f0;border:1px solid #cfcfcf"></div>
<svg class="a" style="left:9px;top:149px" width="11" height="9" viewBox="0 0 11 9"><path d="M5,0.500 V8.500 L0.500,4.500 Z M10.500,0.500 V8.500 L6,4.500 Z" fill="#222"/></svg>
<div class="a" style="white-space:nowrap;left:29.5px;top:147.0px;font-size:11px;line-height:13.2px;color:#4a4a4a;transform:scaleX(0.906);transform-origin:0 50%;">BROWSER</div>
<svg class="a" style="left:283px;top:149px" width="10" height="10" viewBox="0 0 10 10"><circle cx="5" cy="5" r="4.600" fill="#111"/><path d="M2.500,5 H7.500" stroke="#f0f0f0" stroke-width="1.400"/></svg>
<div class="a" style="left:299.500px;top:148px;width:1px;height:11px;background:#666"></div><div class="a" style="left:301.500px;top:150px;width:1px;height:8px;background:#999"></div>
<div class="a" style="left:40.4px;top:171.3px;width:147.5px;height:19.400px;background:rgba(239,239,239,0.96)"></div>
<svg class="a" style="left:20.5px;top:175px" width="12" height="12" viewBox="0 0 12 12"><path d="M11,0.800 V11 H0.800 Z" fill="url(#tg)" stroke="#222" stroke-width="1" stroke-linejoin="round"/><defs><linearGradient id="tg" x1="0" y1="1" x2="1" y2="0.300"><stop offset="0" stop-color="#c8c8c8"/><stop offset="1" stop-color="#4a4a4a"/></linearGradient></defs></svg>
<svg class="a" style="left:43px;top:175px" width="17" height="12" viewBox="0 0 17 12"><path d="M0.500,6 Q8.500,-2.500 16.500,6 Q8.500,14.500 0.500,6 Z" fill="#8e8e8e"/><circle cx="8.500" cy="6" r="3.300" fill="#efefef"/><circle cx="8.500" cy="6" r="1.800" fill="#8e8e8e"/></svg>
<div class="a" style="left:65px;top:173px;width:98px;height:16px;background:#8f8f8f"></div>
<svg class="a" style="left:68px;top:173px" width="17" height="16" viewBox="0 0 17 16"><path d="M1.500,4.500 L3.500,1.500 H8.500 V8 H15 V12 L13,15 H1.500 Z" fill="#f4f4f4" stroke="#444" stroke-width="1" stroke-linejoin="round"/><path d="M1.500,4.500 H6.500 V15 M6.500,4.500 L8.500,1.500 M6.500,10.500 H13 V15 M13,10.500 L15,8" stroke="#555" stroke-width="0.800" fill="none"/></svg>
<div class="a" style="white-space:nowrap;left:98.0px;top:175.1px;font-size:11.5px;line-height:13.8px;color:#fff;font-weight:bold;transform:scaleX(0.993);transform-origin:0 50%;">(Unsaved)</div>
<svg class="a" style="left:166.5px;top:174px" width="14" height="14" viewBox="0 0 14 14"><circle cx="7" cy="7" r="6" fill="#fff" stroke="#222" stroke-width="1"/><circle cx="7" cy="7" r="2.300" fill="#222"/></svg>
<div class="a" style="left:58.1px;top:195.3px;width:133.7px;height:19.400px;background:rgba(239,239,239,0.96)"></div>
<svg class="a" style="left:39.5px;top:198.5px" width="11" height="13" viewBox="0 0 11 13"><path d="M1,0.800 L8.900,6.500 L1,12.200 Z" fill="#fff" stroke="#222" stroke-width="1.100" stroke-linejoin="round"/></svg>
<svg class="a" style="left:61.3px;top:197px" width="16" height="16" viewBox="0 0 16 16"><polygon points="15.84,6.41 15.84,9.59 13.54,9.71 13.13,10.70 14.67,12.42 12.42,14.67 10.71,13.13 9.72,13.54 9.59,15.84 6.41,15.84 6.29,13.54 5.30,13.13 3.58,14.67 1.33,12.42 2.87,10.71 2.46,9.72 0.16,9.59 0.16,6.41 2.46,6.29 2.87,5.30 1.33,3.58 3.58,1.33 5.29,2.87 6.28,2.46 6.41,0.16 9.59,0.16 9.71,2.46 10.70,2.87 12.42,1.33 14.67,3.58 13.13,5.29 13.54,6.28" fill="#8e8e8e"/><circle cx="8" cy="8" r="2.600" fill="#efefef"/></svg>
<div class="a" style="white-space:nowrap;left:91.2px;top:199.1px;font-size:11.5px;line-height:13.8px;color:#262626;transform:scaleX(0.923);transform-origin:0 50%;">Document Settings</div>
<div class="a" style="left:58.1px;top:219.3px;width:109.9px;height:19.400px;background:rgba(239,239,239,0.96)"></div>
<svg class="a" style="left:39.5px;top:222.5px" width="11" height="13" viewBox="0 0 11 13"><path d="M1,0.800 L8.900,6.500 L1,12.200 Z" fill="#fff" stroke="#222" stroke-width="1.100" stroke-linejoin="round"/></svg>
<svg class="a" style="left:61.3px;top:222.5px" width="16" height="13" viewBox="0 0 16 13"><path d="M0,0.500 H6 L7.500,2.500 H16 V13 H0 Z" fill="#8e8e8e"/><path d="M0,3.300 H7 L8,2.500" stroke="#efefef" stroke-width="0.800" fill="none"/></svg>
<div class="a" style="white-space:nowrap;left:91.2px;top:223.1px;font-size:11.5px;line-height:13.8px;color:#262626;transform:scaleX(0.957);transform-origin:0 50%;">Named Views</div>
<div class="a" style="left:58.1px;top:243.3px;width:94.6px;height:19.400px;background:rgba(239,239,239,0.96)"></div>
<svg class="a" style="left:39.5px;top:246.5px" width="11" height="13" viewBox="0 0 11 13"><path d="M1,0.800 L8.900,6.500 L1,12.200 Z" fill="#fff" stroke="#222" stroke-width="1.100" stroke-linejoin="round"/></svg>
<svg class="a" style="left:60.5px;top:247px" width="17" height="12" viewBox="0 0 17 12"><path d="M0.500,6 Q8.500,-2.500 16.500,6 Q8.500,14.500 0.500,6 Z" fill="#dcdcdc"/><circle cx="8.500" cy="6" r="3" fill="#efefef"/><circle cx="8.500" cy="6" r="1.500" fill="#dcdcdc"/><path d="M3,0.500 L14,11.500" stroke="#efefef" stroke-width="2.200"/><path d="M4,0 L15,11" stroke="#dcdcdc" stroke-width="1.200"/></svg>
<svg class="a" style="left:86.2px;top:246.5px" width="16" height="13" viewBox="0 0 16 13"><path d="M0,0.500 H6 L7.500,2.500 H16 V13 H0 Z" fill="#8e8e8e"/><path d="M0,3.300 H7 L8,2.500" stroke="#efefef" stroke-width="0.800" fill="none"/></svg>
<div class="a" style="white-space:nowrap;left:116.4px;top:247.1px;font-size:11.5px;line-height:13.8px;color:#262626;transform:scaleX(0.890);transform-origin:0 50%;">Origin</div>
<div class="a" style="left:58.1px;top:267.3px;width:94.6px;height:19.400px;background:rgba(239,239,239,0.96)"></div>
<svg class="a" style="left:39.5px;top:270.5px" width="11" height="13" viewBox="0 0 11 13"><path d="M1,0.800 L8.900,6.500 L1,12.200 Z" fill="#fff" stroke="#222" stroke-width="1.100" stroke-linejoin="round"/></svg>
<svg class="a" style="left:60.5px;top:271px" width="17" height="12" viewBox="0 0 17 12"><path d="M0.500,6 Q8.500,-2.500 16.500,6 Q8.500,14.500 0.500,6 Z" fill="#8e8e8e"/><circle cx="8.500" cy="6" r="3.300" fill="#efefef"/><circle cx="8.500" cy="6" r="1.800" fill="#8e8e8e"/></svg>
<svg class="a" style="left:86.2px;top:270.5px" width="16" height="13" viewBox="0 0 16 13"><path d="M0,0.500 H6 L7.500,2.500 H16 V13 H0 Z" fill="#8e8e8e"/><path d="M0,3.300 H7 L8,2.500" stroke="#efefef" stroke-width="0.800" fill="none"/></svg>
<div class="a" style="white-space:nowrap;left:116.4px;top:271.1px;font-size:11.5px;line-height:13.8px;color:#262626;transform:scaleX(0.909);transform-origin:0 50%;">Joints</div>
<div class="a" style="left:58.1px;top:291.3px;width:94.9px;height:19.400px;background:rgba(239,239,239,0.96)"></div>
<svg class="a" style="left:38.5px;top:295px" width="12" height="12" viewBox="0 0 12 12"><path d="M11,0.800 V11 H0.800 Z" fill="url(#tg)" stroke="#222" stroke-width="1" stroke-linejoin="round"/><defs><linearGradient id="tg" x1="0" y1="1" x2="1" y2="0.300"><stop offset="0" stop-color="#c8c8c8"/><stop offset="1" stop-color="#4a4a4a"/></linearGradient></defs></svg>
<svg class="a" style="left:60.5px;top:295px" width="17" height="12" viewBox="0 0 17 12"><path d="M0.500,6 Q8.500,-2.500 16.500,6 Q8.500,14.500 0.500,6 Z" fill="#8e8e8e"/><circle cx="8.500" cy="6" r="3.300" fill="#efefef"/><circle cx="8.500" cy="6" r="1.800" fill="#8e8e8e"/></svg>
<svg class="a" style="left:85.5px;top:293px" width="17" height="16" viewBox="0 0 17 16"><path d="M1,5 L4,1.500 H15.500 V11.500 L12.500,15 H1 Z" fill="#fafafa" stroke="#555" stroke-width="1" stroke-linejoin="round"/><path d="M12.500,5 V15 M12.500,5 L15.500,1.500" stroke="#777" stroke-width="0.800" fill="none"/><path d="M12.500,5 L15.500,1.500 V11.500 L12.500,15 Z" fill="#d8d8d8" stroke="#555" stroke-width="0.800"/></svg>
<div class="a" style="white-space:nowrap;left:115.9px;top:295.1px;font-size:11.5px;line-height:13.8px;color:#262626;transform:scaleX(0.910);transform-origin:0 50%;">Leg:1</div>
<div class="a" style="left:75.8px;top:315.3px;width:94.8px;height:19.400px;background:rgba(239,239,239,0.96)"></div>
<svg class="a" style="left:58px;top:318.5px" width="11" height="13" viewBox="0 0 11 13"><path d="M1,0.800 L8.900,6.500 L1,12.200 Z" fill="#fff" stroke="#222" stroke-width="1.100" stroke-linejoin="round"/></svg>
<svg class="a" style="left:78.4px;top:319px" width="17" height="12" viewBox="0 0 17 12"><path d="M0.500,6 Q8.500,-2.500 16.500,6 Q8.500,14.500 0.500,6 Z" fill="#8e8e8e"/><circle cx="8.500" cy="6" r="3.300" fill="#efefef"/><circle cx="8.500" cy="6" r="1.800" fill="#8e8e8e"/></svg>
<svg class="a" style="left:103.9px;top:318.5px" width="16" height="13" viewBox="0 0 16 13"><path d="M0,0.500 H6 L7.500,2.500 H16 V13 H0 Z" fill="#8e8e8e"/><path d="M0,3.300 H7 L8,2.500" stroke="#efefef" stroke-width="0.800" fill="none"/></svg>
<div class="a" style="white-space:nowrap;left:134.1px;top:319.1px;font-size:11.5px;line-height:13.8px;color:#262626;transform:scaleX(0.890);transform-origin:0 50%;">Origin</div>
<div class="a" style="left:75.8px;top:339.3px;width:102.8px;height:19.400px;background:rgba(239,239,239,0.96)"></div>
<svg class="a" style="left:58px;top:342.5px" width="11" height="13" viewBox="0 0 11 13"><path d="M1,0.800 L8.900,6.500 L1,12.200 Z" fill="#fff" stroke="#222" stroke-width="1.100" stroke-linejoin="round"/></svg>
<svg class="a" style="left:78.4px;top:343px" width="17" height="12" viewBox="0 0 17 12"><path d="M0.500,6 Q8.500,-2.500 16.500,6 Q8.500,14.500 0.500,6 Z" fill="#8e8e8e"/><circle cx="8.500" cy="6" r="3.300" fill="#efefef"/><circle cx="8.500" cy="6" r="1.800" fill="#8e8e8e"/></svg>
<svg class="a" style="left:103.9px;top:342.5px" width="16" height="13" viewBox="0 0 16 13"><path d="M0,0.500 H6 L7.500,2.500 H16 V13 H0 Z" fill="#8e8e8e"/><path d="M0,3.300 H7 L8,2.500" stroke="#efefef" stroke-width="0.800" fill="none"/></svg>
<div class="a" style="white-space:nowrap;left:134.1px;top:343.1px;font-size:11.5px;line-height:13.8px;color:#262626;transform:scaleX(0.933);transform-origin:0 50%;">Bodies</div>
<div class="a" style="left:75.8px;top:363.3px;width:114.8px;height:19.400px;background:rgba(239,239,239,0.96)"></div>
<svg class="a" style="left:58px;top:366.5px" width="11" height="13" viewBox="0 0 11 13"><path d="M1,0.800 L8.900,6.500 L1,12.200 Z" fill="#fff" stroke="#222" stroke-width="1.100" stroke-linejoin="round"/></svg>
<svg class="a" style="left:78.4px;top:367px" width="17" height="12" viewBox="0 0 17 12"><path d="M0.500,6 Q8.500,-2.500 16.500,6 Q8.500,14.500 0.500,6 Z" fill="#8e8e8e"/><circle cx="8.500" cy="6" r="3.300" fill="#efefef"/><circle cx="8.500" cy="6" r="1.800" fill="#8e8e8e"/></svg>
<svg class="a" style="left:103.9px;top:366.5px" width="16" height="13" viewBox="0 0 16 13"><path d="M0,0.500 H6 L7.500,2.500 H16 V13 H0 Z" fill="#8e8e8e"/><path d="M0,3.300 H7 L8,2.500" stroke="#efefef" stroke-width="0.800" fill="none"/></svg>
<div class="a" style="white-space:nowrap;left:134.1px;top:367.1px;font-size:11.5px;line-height:13.8px;color:#262626;transform:scaleX(0.941);transform-origin:0 50%;">Sketches</div>
<div class="a" style="left:58.1px;top:387.3px;width:94.9px;height:19.400px;background:rgba(239,239,239,0.96)"></div>
<svg class="a" style="left:39.5px;top:390.5px" width="11" height="13" viewBox="0 0 11 13"><path d="M1,0.800 L8.900,6.500 L1,12.200 Z" fill="#fff" stroke="#222" stroke-width="1.100" stroke-linejoin="round"/></svg>
<svg class="a" style="left:60.5px;top:391px" width="17" height="12" viewBox="0 0 17 12"><path d="M0.500,6 Q8.500,-2.500 16.500,6 Q8.500,14.500 0.500,6 Z" fill="#8e8e8e"/><circle cx="8.500" cy="6" r="3.300" fill="#efefef"/><circle cx="8.500" cy="6" r="1.800" fill="#8e8e8e"/></svg>
<svg class="a" style="left:85.5px;top:389px" width="17" height="16" viewBox="0 0 17 16"><path d="M1,5 L4,1.500 H15.500 V11.500 L12.500,15 H1 Z" fill="#fafafa" stroke="#555" stroke-width="1" stroke-linejoin="round"/><path d="M12.500,5 V15 M12.500,5 L15.500,1.500" stroke="#777" stroke-width="0.800" fill="none"/><path d="M12.500,5 L15.500,1.500 V11.500 L12.500,15 Z" fill="#d8d8d8" stroke="#555" stroke-width="0.800"/></svg>
<div class="a" style="white-space:nowrap;left:115.9px;top:391.1px;font-size:11.5px;line-height:13.8px;color:#262626;transform:scaleX(0.910);transform-origin:0 50%;">Leg:2</div>
<div class="a" style="left:4px;top:649px;width:300px;height:25px;background:#f0f0f0;border:1px solid #cfcfcf;border-top-color:#f0f0f0"></div>
<div class="a" style="white-space:nowrap;left:29.5px;top:654.6px;font-size:11px;line-height:13.2px;color:#4a4a4a;transform:scaleX(0.877);transform-origin:0 50%;">COMMENTS</div>
<svg class="a" style="left:282.5px;top:656.5px" width="10" height="10" viewBox="0 0 10 10"><circle cx="5" cy="5" r="4.600" fill="#111"/><path d="M2.300,5 H7.700 M5,2.300 V7.700" stroke="#f0f0f0" stroke-width="1.400"/></svg>
<div class="a" style="left:299.500px;top:656px;width:1px;height:11px;background:#666"></div><div class="a" style="left:301.500px;top:658px;width:1px;height:8px;background:#999"></div>
<div class="a" style="left:572px;top:649.500px;width:252.500px;height:24.500px;background:#f0f0f0"></div>
<svg class="a" style="left:575px;top:653.5px" width="17" height="17" viewBox="0 0 17 17"><ellipse cx="8" cy="10" rx="6.800" ry="3" fill="none" stroke="#222" stroke-width="1.300"/><path d="M8.500,2 V15" stroke="#222" stroke-width="1.300"/><path d="M8.500,0.300 L11,3.800 H6 Z" fill="#222"/><path d="M4.500,10.500 L8.500,12.500 L4.800,15 Z" fill="#222"/><rect x="7" y="11.500" width="3" height="3" fill="#f0f0f0"/><path d="M8.500,11 V15.500" stroke="#222" stroke-width="1.300"/></svg>
<div class="a" style="left:595.8px;top:659.5px;width:0;height:0;border-left:3.200px solid transparent;border-right:3.200px solid transparent;border-top:4px solid #222"></div>
<svg class="a" style="left:607px;top:654px" width="18" height="16" viewBox="0 0 18 16"><path d="M1,5.500 H16.500 V15 H1 Z" fill="#f8f8f8" stroke="#333" stroke-width="1.200"/><rect x="4" y="8.500" width="9.500" height="4" fill="#bbb" stroke="#444" stroke-width="0.900"/><path d="M3.500,5 L6.500,1 L9,3.500 L12.500,1 L14,5" fill="#ccc" stroke="#444" stroke-width="0.900"/></svg>
<div class="a" style="left:631px;top:649.500px;width:26px;height:24.500px;background:#1790d6"></div>
<svg class="a" style="left:635px;top:653px" width="18" height="18" viewBox="0 0 18 18"><path d="M5.500,9.500 V4 Q5.500,2.800 6.500,2.800 Q7.500,2.800 7.500,4 V8 V2.500 Q7.500,1.300 8.500,1.300 Q9.600,1.300 9.600,2.500 V8 V3 Q9.600,1.900 10.600,1.900 Q11.600,1.900 11.600,3 V8.500 V5 Q11.600,4 12.600,4 Q13.600,4 13.600,5 V11 Q13.600,14 12,16.500 H6.500 Q5,14 2.800,11.500 Q1.500,10 2.500,9.300 Q3.600,8.700 4.500,10 Z" fill="#fff" stroke="#1a1a1a" stroke-width="0.900" stroke-linejoin="round"/></svg>
<svg class="a" style="left:659.5px;top:654px" width="18" height="17" viewBox="0 0 18 17"><circle cx="6.500" cy="7.500" r="5.300" fill="#e4ecf2" stroke="#333" stroke-width="1.300"/><path d="M10.500,11.500 L15,16" stroke="#222" stroke-width="2.400"/><path d="M13,3 H17 M15,1 V5 M13,7 H17" stroke="#222" stroke-width="1"/></svg>
<svg class="a" style="left:685px;top:653.5px" width="18" height="18" viewBox="0 0 18 18"><rect x="1" y="1" width="14" height="14" fill="none" stroke="#444" stroke-width="1" stroke-dasharray="2 1.500"/><circle cx="8" cy="7.500" r="5.800" fill="#e4ecf2" stroke="#333" stroke-width="1.300"/><path d="M12,12 L16.500,17" stroke="#222" stroke-width="2.400"/></svg>
<div class="a" style="left:706.6px;top:659.5px;width:0;height:0;border-left:3.200px solid transparent;border-right:3.200px solid transparent;border-top:4px solid #222"></div>
<svg class="a" style="left:726.5px;top:654px" width="17" height="17" viewBox="0 0 17 17"><rect x="1" y="1" width="15" height="11" fill="#8fb0dc" stroke="#333" stroke-width="1.300"/><rect x="3" y="3" width="11" height="7" fill="#a9c4e8"/><path d="M6,13 H11 V14.500 H13 V16 H4 V14.500 H6 Z" fill="#ddd" stroke="#555" stroke-width="0.600"/></svg>
<div class="a" style="left:744.8px;top:659.5px;width:0;height:0;border-left:3.200px solid transparent;border-right:3.200px solid transparent;border-top:4px solid #222"></div>
<svg class="a" style="left:757.5px;top:654px" width="17" height="17" viewBox="0 0 17 17"><rect x="0.500" y="0.500" width="16" height="16" fill="#dfe2ee"/><path d="M0.500,0.500 H16.500 V16.500 H0.500 Z M3.700,0.500 V16.500 M6.900,0.500 V16.500 M10.100,0.500 V16.500 M13.300,0.500 V16.500 M0.500,3.700 H16.500 M0.500,6.900 H16.500 M0.500,10.100 H16.500 M0.500,13.300 H16.500" stroke="#444" stroke-width="0.900" fill="none"/></svg>
<div class="a" style="left:775.5px;top:659.5px;width:0;height:0;border-left:3.200px solid transparent;border-right:3.200px solid transparent;border-top:4px solid #222"></div>
<svg class="a" style="left:788.5px;top:655px" width="17" height="15" viewBox="0 0 17 15"><rect x="1" y="1" width="6.300" height="5.300" fill="#8fb0dc" stroke="#2d4a7a" stroke-width="1.200"/><rect x="9.500" y="1" width="6.300" height="5.300" fill="#8fb0dc" stroke="#2d4a7a" stroke-width="1.200"/><rect x="1" y="8.500" width="6.300" height="5.300" fill="#8fb0dc" stroke="#2d4a7a" stroke-width="1.200"/><rect x="9.500" y="8.500" width="6.300" height="5.300" fill="#8fb0dc" stroke="#2d4a7a" stroke-width="1.200"/></svg>
<div class="a" style="left:806.4px;top:659.5px;width:0;height:0;border-left:3.200px solid transparent;border-right:3.200px solid transparent;border-top:4px solid #222"></div>
<div id="timeline">
<svg class="a" style="left:10px;top:17px" width="13" height="14" viewBox="0 0 13 14"><path d="M1.500,0 V14" stroke="#444" stroke-width="2"/><path d="M12.500,0.500 V13.500 L3,7 Z" fill="#444"/></svg>
<svg class="a" style="left:35px;top:17px" width="14" height="14" viewBox="0 0 14 14"><path d="M9.500,1 V13 L0.500,7 Z" fill="#444"/><rect x="10.800" y="4" width="2" height="6" fill="#444"/></svg>
<svg class="a" style="left:60.5px;top:16px" width="13" height="16" viewBox="0 0 13 16"><path d="M0.500,0.500 V15.500 L12,8 Z" fill="#444"/></svg>
<svg class="a" style="left:84px;top:17px" width="14" height="14" viewBox="0 0 14 14"><path d="M4.500,1 V13 L13.500,7 Z" fill="#444"/><rect x="1.200" y="4" width="2" height="6" fill="#444"/></svg>
<svg class="a" style="left:110.5px;top:17px" width="13" height="14" viewBox="0 0 13 14"><path d="M11.500,0 V14" stroke="#444" stroke-width="2"/><path d="M0.500,0.500 V13.500 L10,7 Z" fill="#444"/></svg>
<svg class="a" style="left:153px;top:33px" width="124" height="8" viewBox="0 0 124 8"><path d="M1.300,0 V6.300 H122.200 V0 M25,2 V6.300 M49,2 V6.300 M73,2 V6.300 M97,2 V6.300" stroke="#c6c6c6" stroke-width="1.500" fill="none"/></svg>
<svg class="a" style="left:145.5px;top:15px" width="17" height="17" viewBox="0 0 17 17"><path d="M1,5 L4.500,1 H16 V12 L12.500,16 H1 Z" fill="#dcdcdc" stroke="#666" stroke-width="1" stroke-linejoin="round"/><path d="M12.500,5 L16,1 V12 L12.500,16 Z" fill="#c4c4c4" stroke="#666" stroke-width="0.800"/><path d="M1,5 H12.500" stroke="#666" stroke-width="0.800"/></svg>
<svg class="a" style="left:169.5px;top:15px" width="18" height="17" viewBox="0 0 18 17"><rect x="1.500" y="1.500" width="12.500" height="12.500" fill="none" stroke="#444" stroke-width="1" stroke-dasharray="3 1.500"/><rect x="0.500" y="0.500" width="2.200" height="2.200" fill="#3f88c6"/><rect x="12.800" y="0.500" width="2.200" height="2.200" fill="#3f88c6"/><rect x="0.500" y="12.800" width="2.200" height="2.200" fill="#3f88c6"/><path d="M9,14.500 L14.500,8.500 L17,11 L11.500,16.500 L8.500,17 Z" fill="#f0b040"/><path d="M14.500,8.500 L16,7 L18,9.200 L17,11 Z" fill="#e85050"/></svg>
<svg class="a" style="left:193.5px;top:15px" width="17" height="17" viewBox="0 0 17 17"><path d="M1,4 L4,1 H12 L9.500,4 Z" fill="#79b8ea"/><path d="M1,4 H9.500 V13.500 H1 Z" fill="#5ea4dc"/><path d="M9.500,4 L12,1 V11 L9.500,13.500 Z" fill="#3f88c6"/><path d="M1,13.500 H9.500 L12,11 V13 L9.500,16 H1 Z" fill="#c4c4c4"/><path d="M15,15 V3" stroke="#222" stroke-width="1"/><path d="M13.500,5 L15,1.500 L16.500,5 Z" fill="#222"/></svg>
<svg class="a" style="left:217px;top:15px" width="18" height="17" viewBox="0 0 18 17"><path d="M1,5 L4.500,1 H10 Q16.500,2 17,9 V12 L13,16 H1 Z" fill="#dcdcdc" stroke="#666" stroke-width="1"/><path d="M8,1.500 H10 Q16.500,2 17,9 L13,11.500 Q12.500,6 6.500,5 Z" fill="#5ea4dc"/><path d="M1,5 H6.500 Q12.500,6 13,11.500 V16" stroke="#666" stroke-width="0.800" fill="none"/></svg>
<svg class="a" style="left:241px;top:15px" width="18" height="17" viewBox="0 0 18 17"><rect x="1.500" y="0.800" width="7" height="7" rx="1.500" fill="#dcdcdc" stroke="#666" stroke-width="1"/><rect x="10" y="9" width="7" height="7" rx="1.500" fill="#dcdcdc" stroke="#666" stroke-width="1"/><path d="M2.500,10 V13.500 H6.500" stroke="#333" stroke-width="1.100" fill="none"/><path d="M5.500,11.500 L8,13.500 L5.500,15.500 Z" fill="#333"/></svg>
<svg class="a" style="left:265px;top:15px" width="18" height="17" viewBox="0 0 18 17"><path d="M1,6 Q1,3.500 3,2.500 L5.500,1.200 Q7.500,0.600 8,2.500 V11.500 L6.500,12.500 V5 L3.500,7 V14.500 L1,16 Z" fill="#dcdcdc" stroke="#555" stroke-width="0.900"/><path d="M9.500,9 L12,7.500 V3.500 L14,2.500 L17,6 V16 L12.500,13.500 L9.500,14.500 Z" fill="#c4c4c4" stroke="#555" stroke-width="0.900"/><path d="M11.200,4 V7" stroke="#3f88c6" stroke-width="1.200"/></svg>
<svg class="a" style="left:279px;top:8px" width="14" height="33" viewBox="0 0 14 33"><path d="M0.500,0.800 H13.500 V4.200 L8.200,10 V32.500 H5.800 V10 L0.500,4.200 Z" fill="#555"/></svg>
<svg class="a" style="left:1336px;top:15px" width="18" height="18" viewBox="0 0 18 18"><polygon points="17.35,7.39 17.35,10.61 14.92,10.83 14.48,11.89 16.04,13.77 13.77,16.04 11.89,14.48 10.83,14.92 10.61,17.35 7.39,17.35 7.17,14.92 6.11,14.48 4.23,16.04 1.96,13.77 3.52,11.89 3.08,10.83 0.65,10.61 0.65,7.39 3.08,7.17 3.52,6.11 1.96,4.23 4.23,1.96 6.11,3.52 7.17,3.08 7.39,0.65 10.61,0.65 10.83,3.08 11.89,3.52 13.77,1.96 16.04,4.23 14.48,6.11 14.92,7.17" fill="#8a8a8a"/><circle cx="9" cy="9" r="2.800" fill="#f0f0f0"/></svg>
</div>
<div id="taskbar">
<svg class="a" style="left:16px;top:12px" width="17" height="17" viewBox="0 0 17 17"><path d="M0,2.400 L6.900,1.400 V8 H0 Z M7.800,1.300 L16.500,0 V8 H7.800 Z M0,8.900 H6.900 V15.500 L0,14.500 Z M7.800,8.900 H16.500 V17 L7.800,15.700 Z" fill="#fff"/></svg>
<div class="a" style="left:48px;top:0;width:344px;height:40px;background:#f2f2f2"></div>
<svg class="a" style="left:57px;top:9px" width="22" height="22" viewBox="0 0 22 22"><circle cx="11" cy="11" r="8.700" fill="none" stroke="#111" stroke-width="2.600"/></svg>
<div class="a" style="white-space:nowrap;left:88.2px;top:12.0px;font-size:15px;line-height:18.0px;color:#2e2e2e;transform:scaleX(0.980);transform-origin:0 50%;">Taper ici pour rechercher</div>
<svg class="a" style="left:366px;top:12px" width="11" height="17" viewBox="0 0 11 17"><rect x="2.800" y="0.600" width="5.400" height="10" rx="2.700" fill="none" stroke="#222" stroke-width="1.100"/><path d="M0.600,8 Q0.600,13 5.500,13 Q10.400,13 10.400,8 M5.500,13 V16 M3,16.300 H8" stroke="#222" stroke-width="1.100" fill="none"/></svg>
<svg class="a" style="left:406px;top:13px" width="19" height="15" viewBox="0 0 19 15"><rect x="2.500" y="4" width="9.500" height="7.500" fill="none" stroke="#fff" stroke-width="1.100"/><path d="M0.500,1.200 H12.500 M0.500,14.200 H12.500 M15.500,1 V3 M15.500,5.500 V14.500 M17.800,4 V5.500" stroke="#fff" stroke-width="1.200" fill="none"/></svg>
<div class="a" style="left:447.5px;top:37.500px;width:31.5px;height:2.500px;background:#76b9ed"></div>
<div class="a" style="left:481.0px;top:37.500px;width:5.0px;height:2.500px;background:#76b9ed"></div>
<svg class="a" style="left:456px;top:9.5px" width="23" height="20" viewBox="0 0 23 20"><path d="M0.500,2 Q0.500,0.500 2,0.500 H8 L10,3 H21 Q22.500,3 22.500,4.500 V18 H0.500 Z" fill="#f7d367"/><path d="M0.500,6 H22.500 V18.500 Q22.500,19.500 21.500,19.500 H1.500 Q0.500,19.500 0.500,18.500 Z" fill="#fbe18c"/><path d="M5,12.500 H18 V19.500 H14.500 V16 H8.500 V19.500 H5 Z" fill="#4aa0e0"/></svg>
<div class="a" style="left:495.4px;top:37.500px;width:40.3px;height:2.500px;background:#76b9ed"></div>
<svg class="a" style="left:505px;top:9px" width="23" height="23" viewBox="0 0 23 23"><path d="M1,10.500 Q2.500,1 12,1 Q22,1.500 22,12 V14 H8 Q8.500,18 13.500,18.500 Q17.500,18.500 21,16.500 V21 Q17.500,23 12.500,22.500 Q3,21.500 3.500,12.500 Q4,7.500 8.500,5.500 Q3.500,6.500 1,10.500 Z M8,10 H15.500 Q15.500,6 12,6 Q8.500,6 8,10 Z" fill="#2f7fe0" fill-rule="evenodd"/></svg>
<svg class="a" style="left:553px;top:7px" width="23" height="24" viewBox="0 0 23 24"><path d="M1,7 H22 V22 Q22,23.500 20.500,23.500 H2.500 Q1,23.500 1,22 Z" fill="#fff"/><path d="M7,7 Q7,1.500 11.500,1.500 Q16,1.500 16,7" stroke="#fff" stroke-width="1.500" fill="none"/><rect x="6.500" y="10" width="4.500" height="4.500" fill="#f25022"/><rect x="12" y="10" width="4.500" height="4.500" fill="#7fba00"/><rect x="6.500" y="15.500" width="4.500" height="4.500" fill="#00a4ef"/><rect x="12" y="15.500" width="4.500" height="4.500" fill="#ffb900"/></svg>
<svg class="a" style="left:602px;top:7.5px" width="24" height="24" viewBox="0 0 24 24"><rect width="24" height="24" rx="4" fill="#fff"/><rect x="3.500" y="8" width="17" height="4" fill="#b0161c"/><rect x="5" y="13" width="14" height="8.500" fill="#b0161c"/><rect x="10.800" y="8" width="2.400" height="13.500" fill="#fff"/><path d="M12,7.500 Q7,1 5.500,4.500 Q5,7.500 12,7.500 Q19,7.500 18.500,4.500 Q17,1 12,7.500 Z" fill="none" stroke="#b0161c" stroke-width="1.600"/></svg>
<svg class="a" style="left:650.5px;top:11px" width="25" height="17" viewBox="0 0 25 17"><path d="M0.500,6.500 L12.500,0.500 L24.500,6.500 V16.500 H0.500 Z" fill="#fff"/><path d="M0.500,6.500 L16,12 L24.500,6.500" stroke="#323232" stroke-width="1.400" fill="none"/><path d="M9,16.500 L16,12" stroke="#323232" stroke-width="1.200"/></svg>
<div class="a" style="left:692.0px;top:37.500px;width:40.2px;height:2.500px;background:#76b9ed"></div>
<svg class="a" style="left:700px;top:8px" width="33" height="27" viewBox="0 0 33 27"><path d="M2,11 Q0.500,2 9,1.500 Q12,0 15,2 Q22,1.500 22.500,9.500 Q25,16 19,19.500 Q14,23 9,21 Q1,21 2,11 Z" fill="#1da1e6"/><text x="12" y="17" text-anchor="middle" font-family="Liberation Sans,sans-serif" font-weight="bold" font-size="15" fill="#fff">S</text><circle cx="24" cy="19.500" r="6.600" fill="#323232" stroke="#ddd" stroke-width="1.200"/><text x="24" y="23.500" text-anchor="middle" font-family="Liberation Sans,sans-serif" font-weight="bold" font-size="10.500" fill="#fff">1</text></svg>
<div class="a" style="left:737px;top:0;width:44px;height:40px;background:#4f4f4f"></div>
<div class="a" style="left:737.0px;top:37.500px;width:44.0px;height:2.500px;background:#76b9ed"></div>
<svg class="a" style="left:748.5px;top:8px" width="25" height="25" viewBox="0 0 25 25"><rect width="25" height="25" rx="1" fill="#f6e2cf"/><rect x="0" y="0" width="25" height="12" fill="#f9eadb"/><path d="M8,4.500 H18 V8 H11.800 V10.800 H16.800 V14.200 H11.800 V20.500 H8 Z" fill="#ea8a34"/><path d="M8,4.500 H18 V8 H11.800 V10.800 H16.800 V14.200 H11.800 V20.500 H8 Z" fill="none" stroke="#d07020" stroke-width="0.500"/><rect x="16.500" y="19.500" width="7" height="3.500" fill="#e3c3a3"/></svg>
<div class="a" style="left:790.0px;top:37.500px;width:39.0px;height:2.500px;background:#76b9ed"></div>
<svg class="a" style="left:798px;top:6.5px" width="25" height="25" viewBox="0 0 25 25"><path d="M12.500,0.500 L18.500,6.500 L12.500,12.500 L6.500,6.500 Z" fill="#e8556a"/><path d="M6.500,6.500 L12.500,12.500 L6.500,18.500 L0.500,12.500 Z" fill="#57a8e8"/><path d="M18.500,6.500 L24.500,12.500 L18.500,18.500 L12.500,12.500 Z" fill="#5fc06a"/><path d="M12.500,12.500 L18.500,18.500 L12.500,24.500 L6.500,18.500 Z" fill="#f0c84a"/><path d="M12.500,7 V17.500 M12.500,11 L16.500,14.500" stroke="#222" stroke-width="1.500" fill="none"/><circle cx="12.500" cy="6.500" r="1.800" fill="#222"/><circle cx="12.500" cy="18" r="1.800" fill="#222"/><circle cx="16.800" cy="14.800" r="1.800" fill="#222"/></svg>
<div class="a" style="left:839.0px;top:37.500px;width:39.6px;height:2.500px;background:#76b9ed"></div>
<svg class="a" style="left:847px;top:8px" width="25" height="25" viewBox="0 0 25 25"><rect width="25" height="25" rx="2" fill="#2f9be0"/><rect x="4" y="4" width="17" height="17" fill="#fff"/><path d="M11,7 H7.500 V18 H11 M14,7 H17.500 V18 H14" stroke="#1a1a1a" stroke-width="2.200" fill="none"/></svg>
<svg class="a" style="left:1055px;top:11px" width="17" height="18" viewBox="0 0 17 18"><circle cx="11" cy="4.500" r="3.200" fill="none" stroke="#fff" stroke-width="1.100"/><path d="M6.500,13 Q7,8.500 11,8.500 Q15,8.500 15.500,12" stroke="#fff" stroke-width="1.100" fill="none"/><circle cx="5" cy="9.500" r="2.600" fill="#323232" stroke="#fff" stroke-width="1.100"/><path d="M1,17 Q1.500,13 5,13 Q8.500,13 9,17" stroke="#fff" stroke-width="1.100" fill="none"/></svg>
<svg class="a" style="left:1092px;top:16px" width="14" height="8" viewBox="0 0 14 8"><path d="M1,7.500 L7,1.500 L13,7.500" stroke="#fff" stroke-width="1.300" fill="none"/></svg>
<svg class="a" style="left:1114px;top:12px" width="18" height="17" viewBox="0 0 18 17"><path d="M2.500,11 Q0.500,10.500 1,8 Q1.500,6 4,6.300 Q5,3 8.500,3.500 Q11,3.800 11.500,6 Q14.500,6 14.500,8.500 Q14.500,11 12,11 Z" fill="#b9b9b9"/><path d="M4.500,8 Q5,5.500 8,5.800" stroke="#e8e8e8" stroke-width="1" fill="none"/><circle cx="12" cy="11.500" r="4.600" fill="#d6202c"/><path d="M10,9.500 L14,13.500 M14,9.500 L10,13.500" stroke="#fff" stroke-width="1.200"/></svg>
<svg class="a" style="left:1139px;top:13px" width="17" height="13" viewBox="0 0 17 13"><rect x="5.500" y="3.500" width="10" height="6.500" fill="none" stroke="#fff" stroke-width="1.100"/><rect x="6.800" y="4.800" width="3.500" height="4" fill="#fff"/><path d="M16,5.500 V8" stroke="#fff" stroke-width="1.200"/><path d="M1.500,0.500 V3 M4,0.500 V3 M0.500,3 H5 V5 Q5,7 2.800,7 Q0.500,7 0.500,5 Z M2.800,7 V10 H5.500" stroke="#fff" stroke-width="1" fill="none"/></svg>
<svg class="a" style="left:1165px;top:12px" width="15" height="15" viewBox="0 0 15 15"><path d="M1.500,13.500 Q2,3 13,2" stroke="#fff" stroke-width="1.200" fill="none"/><path d="M4.500,13.500 Q5,6 13,5.200" stroke="#fff" stroke-width="1.200" fill="none"/><path d="M7.500,13.500 Q8,9 13,8.500" stroke="#fff" stroke-width="1.200" fill="none"/><circle cx="11.500" cy="12.500" r="1.500" fill="#fff"/></svg>
<svg class="a" style="left:1186px;top:12px" width="18" height="15" viewBox="0 0 18 15"><path d="M1,5.500 H3.500 L7,2 V13 L3.500,9.500 H1 Z" fill="none" stroke="#fff" stroke-width="1.100" stroke-linejoin="round"/><path d="M9.500,5 Q11,7.500 9.500,10 M12,3.500 Q14.500,7.500 12,11.500 M14.500,2 Q18,7.500 14.500,13" stroke="#fff" stroke-width="1.100" fill="none"/></svg>
<div class="a" style="white-space:nowrap;left:1214.5px;top:12.6px;font-size:12px;line-height:14.4px;color:#fff;transform:scaleX(0.854);transform-origin:0 50%;">FRA</div>
<div class="a" style="white-space:nowrap;left:1263.7px;top:4.1px;font-size:12px;line-height:14.4px;color:#fff;transform:scaleX(0.902);transform-origin:0 50%;">22:40</div>
<div class="a" style="white-space:nowrap;left:1249.7px;top:21.8px;font-size:12px;line-height:14.4px;color:#fff;transform:scaleX(0.962);transform-origin:0 50%;">16/02/2020</div>
<svg class="a" style="left:1325px;top:12px" width="17" height="16" viewBox="0 0 17 16"><path d="M0.800,0.800 H16 V11.500 H10.500 L8,14.500 V11.500 H0.800 Z" fill="none" stroke="#fff" stroke-width="1.200" stroke-linejoin="miter"/></svg>
</div>
</body></html>
